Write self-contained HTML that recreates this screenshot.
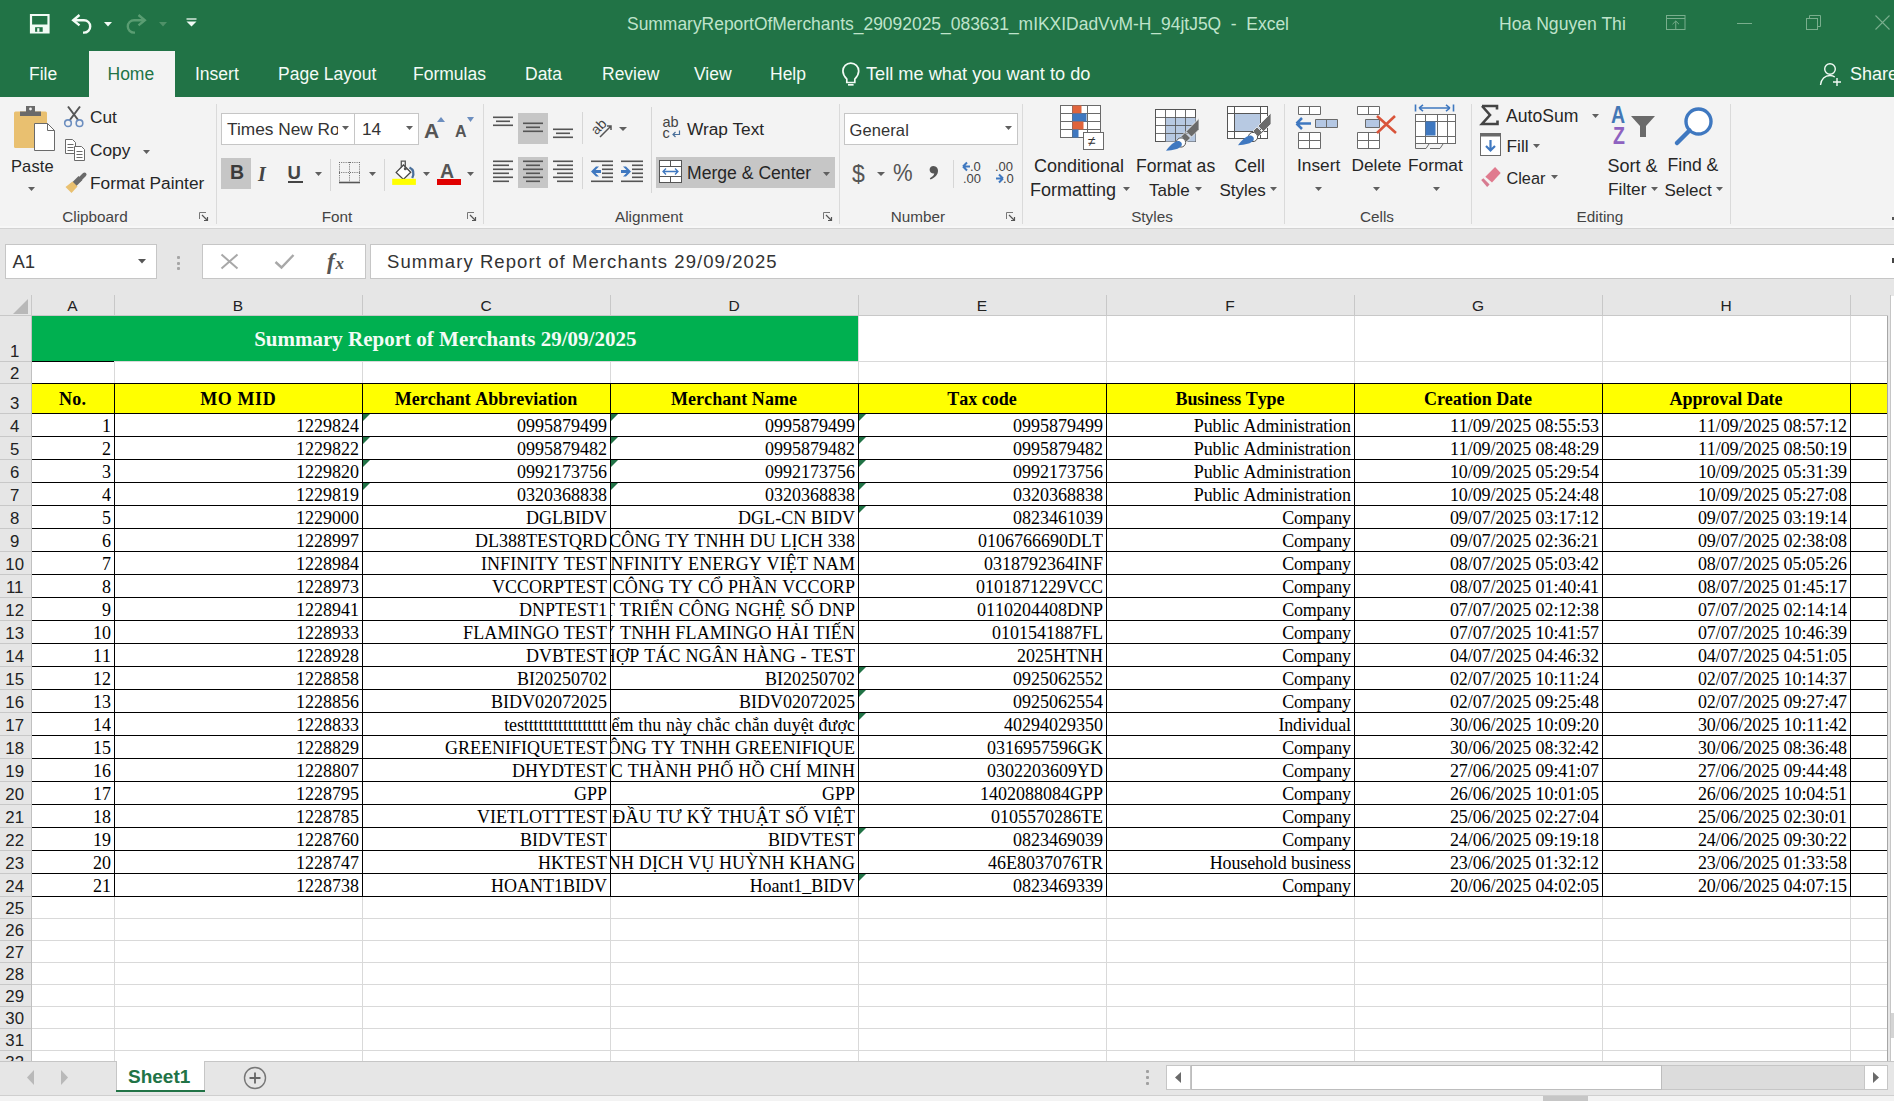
<!DOCTYPE html>
<html><head><meta charset="utf-8"><style>
html,body{margin:0;padding:0;}
body{width:1894px;height:1101px;overflow:hidden;position:relative;background:#e6e6e6;font-family:'Liberation Sans', sans-serif;}
.b{position:absolute;}
.t{position:absolute;white-space:nowrap;line-height:1;}
.c{position:absolute;overflow:hidden;display:flex;justify-content:flex-end;font-family:'Liberation Serif', serif;font-size:18px;line-height:1;font-kerning:none;color:#000;white-space:nowrap}
.c span{position:relative;flex:none}
svg{overflow:visible}
</style></head><body>
<div class="b" style="left:0px;top:0px;width:1894px;height:97px;background:#217346"></div><div class="b" style="left:89px;top:51px;width:86px;height:48px;background:#f3f3f3"></div><div class="t" style="left:627px;top:16.23px;font-size:17.45px;color:#bfe3cb;font-weight:400;font-family:'Liberation Sans', sans-serif;white-space:pre;">SummaryReportOfMerchants_29092025_083631_mIKXIDadVvM-H_94jtJ5Q  -  Excel</div><div class="t" style="left:1499px;top:16.10px;font-size:17.6px;color:#bfe3cb;font-weight:400;font-family:'Liberation Sans', sans-serif;">Hoa Nguyen Thi</div><div class="t" style="left:29px;top:66.19px;font-size:17.5px;color:#f4fbf6;font-weight:400;font-family:'Liberation Sans', sans-serif;">File</div><div class="t" style="left:195px;top:66.19px;font-size:17.5px;color:#f4fbf6;font-weight:400;font-family:'Liberation Sans', sans-serif;">Insert</div><div class="t" style="left:278px;top:66.19px;font-size:17.5px;color:#f4fbf6;font-weight:400;font-family:'Liberation Sans', sans-serif;">Page Layout</div><div class="t" style="left:413px;top:66.19px;font-size:17.5px;color:#f4fbf6;font-weight:400;font-family:'Liberation Sans', sans-serif;">Formulas</div><div class="t" style="left:525px;top:66.19px;font-size:17.5px;color:#f4fbf6;font-weight:400;font-family:'Liberation Sans', sans-serif;">Data</div><div class="t" style="left:602px;top:66.19px;font-size:17.5px;color:#f4fbf6;font-weight:400;font-family:'Liberation Sans', sans-serif;">Review</div><div class="t" style="left:694px;top:66.19px;font-size:17.5px;color:#f4fbf6;font-weight:400;font-family:'Liberation Sans', sans-serif;">View</div><div class="t" style="left:770px;top:66.19px;font-size:17.5px;color:#f4fbf6;font-weight:400;font-family:'Liberation Sans', sans-serif;">Help</div><div class="t" style="left:107.5px;top:66.19px;font-size:17.5px;color:#217346;font-weight:400;font-family:'Liberation Sans', sans-serif;">Home</div><div class="t" style="left:866px;top:64.59px;font-size:18.2px;color:#f4fbf6;font-weight:400;font-family:'Liberation Sans', sans-serif;">Tell me what you want to do</div><div class="t" style="left:1850px;top:64.76px;font-size:18px;color:#f4fbf6;font-weight:400;font-family:'Liberation Sans', sans-serif;">Share</div><div class="b" style="left:0px;top:97px;width:1894px;height:131px;background:#f3f3f3"></div><div class="b" style="left:0px;top:226px;width:1894px;height:2px;background:#f7f7f7"></div><div class="b" style="left:0px;top:228px;width:1894px;height:1px;background:#d2d2d2"></div><div class="b" style="left:216px;top:104px;width:1px;height:120px;background:#dadada"></div><div class="b" style="left:483px;top:104px;width:1px;height:120px;background:#dadada"></div><div class="b" style="left:839px;top:104px;width:1px;height:120px;background:#dadada"></div><div class="b" style="left:1022px;top:104px;width:1px;height:120px;background:#dadada"></div><div class="b" style="left:1284px;top:104px;width:1px;height:120px;background:#dadada"></div><div class="b" style="left:1471px;top:104px;width:1px;height:120px;background:#dadada"></div><div class="b" style="left:1730px;top:104px;width:1px;height:120px;background:#dadada"></div><div class="t" style="left:15.0px;width:160px;text-align:center;top:209.05px;font-size:15.3px;color:#444;font-weight:400;font-family:'Liberation Sans', sans-serif;">Clipboard</div><div class="t" style="left:257.0px;width:160px;text-align:center;top:209.05px;font-size:15.3px;color:#444;font-weight:400;font-family:'Liberation Sans', sans-serif;">Font</div><div class="t" style="left:569.0px;width:160px;text-align:center;top:209.05px;font-size:15.3px;color:#444;font-weight:400;font-family:'Liberation Sans', sans-serif;">Alignment</div><div class="t" style="left:838.0px;width:160px;text-align:center;top:209.05px;font-size:15.3px;color:#444;font-weight:400;font-family:'Liberation Sans', sans-serif;">Number</div><div class="t" style="left:1072.0px;width:160px;text-align:center;top:209.05px;font-size:15.3px;color:#444;font-weight:400;font-family:'Liberation Sans', sans-serif;">Styles</div><div class="t" style="left:1297.0px;width:160px;text-align:center;top:209.05px;font-size:15.3px;color:#444;font-weight:400;font-family:'Liberation Sans', sans-serif;">Cells</div><div class="t" style="left:1520.0px;width:160px;text-align:center;top:209.05px;font-size:15.3px;color:#444;font-weight:400;font-family:'Liberation Sans', sans-serif;">Editing</div><div class="b" style="left:0px;top:229px;width:1894px;height:87px;background:#e6e6e6"></div><div class="b" style="left:5px;top:244px;width:152px;height:35px;background:#fff;border:1px solid #c6c6c6;box-sizing:border-box"></div><div class="t" style="left:12.5px;top:252.84px;font-size:18.5px;color:#333;font-weight:400;font-family:'Liberation Sans', sans-serif;">A1</div><div class="b" style="left:202px;top:244px;width:164px;height:35px;background:#fff;border:1px solid #c6c6c6;box-sizing:border-box"></div><div class="b" style="left:370px;top:244px;width:1530px;height:35px;background:#fff;border:1px solid #c6c6c6;box-sizing:border-box"></div><div class="t" style="left:387px;top:252.84px;font-size:18.5px;color:#333;font-weight:400;font-family:'Liberation Sans', sans-serif;letter-spacing:1.08px;">Summary Report of Merchants 29/09/2025</div><div class="b" style="left:0px;top:295px;width:1888px;height:21px;background:#e6e6e6"></div><div class="b" style="left:0px;top:316px;width:31px;height:745px;background:#e6e6e6"></div><div class="b" style="left:114px;top:295px;width:1px;height:21px;background:#c8c8c8"></div><div class="t" style="left:31.0px;width:83px;text-align:center;top:297.88px;font-size:15.5px;color:#222;font-weight:400;font-family:'Liberation Sans', sans-serif;">A</div><div class="b" style="left:362px;top:295px;width:1px;height:21px;background:#c8c8c8"></div><div class="t" style="left:114.0px;width:248px;text-align:center;top:297.88px;font-size:15.5px;color:#222;font-weight:400;font-family:'Liberation Sans', sans-serif;">B</div><div class="b" style="left:610px;top:295px;width:1px;height:21px;background:#c8c8c8"></div><div class="t" style="left:362.0px;width:248px;text-align:center;top:297.88px;font-size:15.5px;color:#222;font-weight:400;font-family:'Liberation Sans', sans-serif;">C</div><div class="b" style="left:858px;top:295px;width:1px;height:21px;background:#c8c8c8"></div><div class="t" style="left:610.0px;width:248px;text-align:center;top:297.88px;font-size:15.5px;color:#222;font-weight:400;font-family:'Liberation Sans', sans-serif;">D</div><div class="b" style="left:1106px;top:295px;width:1px;height:21px;background:#c8c8c8"></div><div class="t" style="left:858.0px;width:248px;text-align:center;top:297.88px;font-size:15.5px;color:#222;font-weight:400;font-family:'Liberation Sans', sans-serif;">E</div><div class="b" style="left:1354px;top:295px;width:1px;height:21px;background:#c8c8c8"></div><div class="t" style="left:1106.0px;width:248px;text-align:center;top:297.88px;font-size:15.5px;color:#222;font-weight:400;font-family:'Liberation Sans', sans-serif;">F</div><div class="b" style="left:1602px;top:295px;width:1px;height:21px;background:#c8c8c8"></div><div class="t" style="left:1354.0px;width:248px;text-align:center;top:297.88px;font-size:15.5px;color:#222;font-weight:400;font-family:'Liberation Sans', sans-serif;">G</div><div class="b" style="left:1850px;top:295px;width:1px;height:21px;background:#c8c8c8"></div><div class="t" style="left:1602.0px;width:248px;text-align:center;top:297.88px;font-size:15.5px;color:#222;font-weight:400;font-family:'Liberation Sans', sans-serif;">H</div><div class="b" style="left:2098px;top:295px;width:1px;height:21px;background:#c8c8c8"></div><div class="t" style="left:1850.0px;width:248px;text-align:center;top:297.88px;font-size:15.5px;color:#222;font-weight:400;font-family:'Liberation Sans', sans-serif;">I</div><div class="b" style="left:0px;top:315px;width:1888px;height:1px;background:#c8c8c8"></div><div class="b" style="left:31px;top:295px;width:1px;height:21px;background:#c8c8c8"></div><div class="b" style="left:31px;top:316px;width:1857px;height:745px;background:#fff"></div><div class="b" style="left:31px;top:361px;width:1857px;height:1px;background:#d9d9d9"></div><div class="b" style="left:31px;top:383px;width:1857px;height:1px;background:#d9d9d9"></div><div class="b" style="left:31px;top:413px;width:1857px;height:1px;background:#d9d9d9"></div><div class="b" style="left:31px;top:436px;width:1857px;height:1px;background:#d9d9d9"></div><div class="b" style="left:31px;top:459px;width:1857px;height:1px;background:#d9d9d9"></div><div class="b" style="left:31px;top:482px;width:1857px;height:1px;background:#d9d9d9"></div><div class="b" style="left:31px;top:505px;width:1857px;height:1px;background:#d9d9d9"></div><div class="b" style="left:31px;top:528px;width:1857px;height:1px;background:#d9d9d9"></div><div class="b" style="left:31px;top:551px;width:1857px;height:1px;background:#d9d9d9"></div><div class="b" style="left:31px;top:574px;width:1857px;height:1px;background:#d9d9d9"></div><div class="b" style="left:31px;top:597px;width:1857px;height:1px;background:#d9d9d9"></div><div class="b" style="left:31px;top:620px;width:1857px;height:1px;background:#d9d9d9"></div><div class="b" style="left:31px;top:643px;width:1857px;height:1px;background:#d9d9d9"></div><div class="b" style="left:31px;top:666px;width:1857px;height:1px;background:#d9d9d9"></div><div class="b" style="left:31px;top:689px;width:1857px;height:1px;background:#d9d9d9"></div><div class="b" style="left:31px;top:712px;width:1857px;height:1px;background:#d9d9d9"></div><div class="b" style="left:31px;top:735px;width:1857px;height:1px;background:#d9d9d9"></div><div class="b" style="left:31px;top:758px;width:1857px;height:1px;background:#d9d9d9"></div><div class="b" style="left:31px;top:781px;width:1857px;height:1px;background:#d9d9d9"></div><div class="b" style="left:31px;top:804px;width:1857px;height:1px;background:#d9d9d9"></div><div class="b" style="left:31px;top:827px;width:1857px;height:1px;background:#d9d9d9"></div><div class="b" style="left:31px;top:850px;width:1857px;height:1px;background:#d9d9d9"></div><div class="b" style="left:31px;top:873px;width:1857px;height:1px;background:#d9d9d9"></div><div class="b" style="left:31px;top:896px;width:1857px;height:1px;background:#d9d9d9"></div><div class="b" style="left:31px;top:918px;width:1857px;height:1px;background:#d9d9d9"></div><div class="b" style="left:31px;top:940px;width:1857px;height:1px;background:#d9d9d9"></div><div class="b" style="left:31px;top:962px;width:1857px;height:1px;background:#d9d9d9"></div><div class="b" style="left:31px;top:984px;width:1857px;height:1px;background:#d9d9d9"></div><div class="b" style="left:31px;top:1006px;width:1857px;height:1px;background:#d9d9d9"></div><div class="b" style="left:31px;top:1028px;width:1857px;height:1px;background:#d9d9d9"></div><div class="b" style="left:31px;top:1050px;width:1857px;height:1px;background:#d9d9d9"></div><div class="b" style="left:114px;top:316px;width:1px;height:745px;background:#d9d9d9"></div><div class="b" style="left:362px;top:316px;width:1px;height:745px;background:#d9d9d9"></div><div class="b" style="left:610px;top:316px;width:1px;height:745px;background:#d9d9d9"></div><div class="b" style="left:858px;top:316px;width:1px;height:745px;background:#d9d9d9"></div><div class="b" style="left:1106px;top:316px;width:1px;height:745px;background:#d9d9d9"></div><div class="b" style="left:1354px;top:316px;width:1px;height:745px;background:#d9d9d9"></div><div class="b" style="left:1602px;top:316px;width:1px;height:745px;background:#d9d9d9"></div><div class="b" style="left:1850px;top:316px;width:1px;height:745px;background:#d9d9d9"></div><div class="b" style="left:0px;top:361px;width:31px;height:1px;background:#c8c8c8"></div><div class="t" style="left:-0.8000000000000007px;width:31px;text-align:center;top:343.78px;font-size:16.8px;color:#222;font-weight:400;font-family:'Liberation Sans', sans-serif;">1</div><div class="b" style="left:0px;top:383px;width:31px;height:1px;background:#c8c8c8"></div><div class="t" style="left:-0.8000000000000007px;width:31px;text-align:center;top:365.78px;font-size:16.8px;color:#222;font-weight:400;font-family:'Liberation Sans', sans-serif;">2</div><div class="b" style="left:0px;top:413px;width:31px;height:1px;background:#c8c8c8"></div><div class="t" style="left:-0.8000000000000007px;width:31px;text-align:center;top:395.78px;font-size:16.8px;color:#222;font-weight:400;font-family:'Liberation Sans', sans-serif;">3</div><div class="b" style="left:0px;top:436px;width:31px;height:1px;background:#c8c8c8"></div><div class="t" style="left:-0.8000000000000007px;width:31px;text-align:center;top:418.78px;font-size:16.8px;color:#222;font-weight:400;font-family:'Liberation Sans', sans-serif;">4</div><div class="b" style="left:0px;top:459px;width:31px;height:1px;background:#c8c8c8"></div><div class="t" style="left:-0.8000000000000007px;width:31px;text-align:center;top:441.78px;font-size:16.8px;color:#222;font-weight:400;font-family:'Liberation Sans', sans-serif;">5</div><div class="b" style="left:0px;top:482px;width:31px;height:1px;background:#c8c8c8"></div><div class="t" style="left:-0.8000000000000007px;width:31px;text-align:center;top:464.78px;font-size:16.8px;color:#222;font-weight:400;font-family:'Liberation Sans', sans-serif;">6</div><div class="b" style="left:0px;top:505px;width:31px;height:1px;background:#c8c8c8"></div><div class="t" style="left:-0.8000000000000007px;width:31px;text-align:center;top:487.78px;font-size:16.8px;color:#222;font-weight:400;font-family:'Liberation Sans', sans-serif;">7</div><div class="b" style="left:0px;top:528px;width:31px;height:1px;background:#c8c8c8"></div><div class="t" style="left:-0.8000000000000007px;width:31px;text-align:center;top:510.78px;font-size:16.8px;color:#222;font-weight:400;font-family:'Liberation Sans', sans-serif;">8</div><div class="b" style="left:0px;top:551px;width:31px;height:1px;background:#c8c8c8"></div><div class="t" style="left:-0.8000000000000007px;width:31px;text-align:center;top:533.78px;font-size:16.8px;color:#222;font-weight:400;font-family:'Liberation Sans', sans-serif;">9</div><div class="b" style="left:0px;top:574px;width:31px;height:1px;background:#c8c8c8"></div><div class="t" style="left:-0.8000000000000007px;width:31px;text-align:center;top:556.78px;font-size:16.8px;color:#222;font-weight:400;font-family:'Liberation Sans', sans-serif;">10</div><div class="b" style="left:0px;top:597px;width:31px;height:1px;background:#c8c8c8"></div><div class="t" style="left:-0.8000000000000007px;width:31px;text-align:center;top:579.78px;font-size:16.8px;color:#222;font-weight:400;font-family:'Liberation Sans', sans-serif;">11</div><div class="b" style="left:0px;top:620px;width:31px;height:1px;background:#c8c8c8"></div><div class="t" style="left:-0.8000000000000007px;width:31px;text-align:center;top:602.78px;font-size:16.8px;color:#222;font-weight:400;font-family:'Liberation Sans', sans-serif;">12</div><div class="b" style="left:0px;top:643px;width:31px;height:1px;background:#c8c8c8"></div><div class="t" style="left:-0.8000000000000007px;width:31px;text-align:center;top:625.78px;font-size:16.8px;color:#222;font-weight:400;font-family:'Liberation Sans', sans-serif;">13</div><div class="b" style="left:0px;top:666px;width:31px;height:1px;background:#c8c8c8"></div><div class="t" style="left:-0.8000000000000007px;width:31px;text-align:center;top:648.78px;font-size:16.8px;color:#222;font-weight:400;font-family:'Liberation Sans', sans-serif;">14</div><div class="b" style="left:0px;top:689px;width:31px;height:1px;background:#c8c8c8"></div><div class="t" style="left:-0.8000000000000007px;width:31px;text-align:center;top:671.78px;font-size:16.8px;color:#222;font-weight:400;font-family:'Liberation Sans', sans-serif;">15</div><div class="b" style="left:0px;top:712px;width:31px;height:1px;background:#c8c8c8"></div><div class="t" style="left:-0.8000000000000007px;width:31px;text-align:center;top:694.78px;font-size:16.8px;color:#222;font-weight:400;font-family:'Liberation Sans', sans-serif;">16</div><div class="b" style="left:0px;top:735px;width:31px;height:1px;background:#c8c8c8"></div><div class="t" style="left:-0.8000000000000007px;width:31px;text-align:center;top:717.78px;font-size:16.8px;color:#222;font-weight:400;font-family:'Liberation Sans', sans-serif;">17</div><div class="b" style="left:0px;top:758px;width:31px;height:1px;background:#c8c8c8"></div><div class="t" style="left:-0.8000000000000007px;width:31px;text-align:center;top:740.78px;font-size:16.8px;color:#222;font-weight:400;font-family:'Liberation Sans', sans-serif;">18</div><div class="b" style="left:0px;top:781px;width:31px;height:1px;background:#c8c8c8"></div><div class="t" style="left:-0.8000000000000007px;width:31px;text-align:center;top:763.78px;font-size:16.8px;color:#222;font-weight:400;font-family:'Liberation Sans', sans-serif;">19</div><div class="b" style="left:0px;top:804px;width:31px;height:1px;background:#c8c8c8"></div><div class="t" style="left:-0.8000000000000007px;width:31px;text-align:center;top:786.78px;font-size:16.8px;color:#222;font-weight:400;font-family:'Liberation Sans', sans-serif;">20</div><div class="b" style="left:0px;top:827px;width:31px;height:1px;background:#c8c8c8"></div><div class="t" style="left:-0.8000000000000007px;width:31px;text-align:center;top:809.78px;font-size:16.8px;color:#222;font-weight:400;font-family:'Liberation Sans', sans-serif;">21</div><div class="b" style="left:0px;top:850px;width:31px;height:1px;background:#c8c8c8"></div><div class="t" style="left:-0.8000000000000007px;width:31px;text-align:center;top:832.78px;font-size:16.8px;color:#222;font-weight:400;font-family:'Liberation Sans', sans-serif;">22</div><div class="b" style="left:0px;top:873px;width:31px;height:1px;background:#c8c8c8"></div><div class="t" style="left:-0.8000000000000007px;width:31px;text-align:center;top:855.78px;font-size:16.8px;color:#222;font-weight:400;font-family:'Liberation Sans', sans-serif;">23</div><div class="b" style="left:0px;top:896px;width:31px;height:1px;background:#c8c8c8"></div><div class="t" style="left:-0.8000000000000007px;width:31px;text-align:center;top:878.78px;font-size:16.8px;color:#222;font-weight:400;font-family:'Liberation Sans', sans-serif;">24</div><div class="b" style="left:0px;top:918px;width:31px;height:1px;background:#c8c8c8"></div><div class="t" style="left:-0.8000000000000007px;width:31px;text-align:center;top:900.78px;font-size:16.8px;color:#222;font-weight:400;font-family:'Liberation Sans', sans-serif;">25</div><div class="b" style="left:0px;top:940px;width:31px;height:1px;background:#c8c8c8"></div><div class="t" style="left:-0.8000000000000007px;width:31px;text-align:center;top:922.78px;font-size:16.8px;color:#222;font-weight:400;font-family:'Liberation Sans', sans-serif;">26</div><div class="b" style="left:0px;top:962px;width:31px;height:1px;background:#c8c8c8"></div><div class="t" style="left:-0.8000000000000007px;width:31px;text-align:center;top:944.78px;font-size:16.8px;color:#222;font-weight:400;font-family:'Liberation Sans', sans-serif;">27</div><div class="b" style="left:0px;top:984px;width:31px;height:1px;background:#c8c8c8"></div><div class="t" style="left:-0.8000000000000007px;width:31px;text-align:center;top:966.78px;font-size:16.8px;color:#222;font-weight:400;font-family:'Liberation Sans', sans-serif;">28</div><div class="b" style="left:0px;top:1006px;width:31px;height:1px;background:#c8c8c8"></div><div class="t" style="left:-0.8000000000000007px;width:31px;text-align:center;top:988.78px;font-size:16.8px;color:#222;font-weight:400;font-family:'Liberation Sans', sans-serif;">29</div><div class="b" style="left:0px;top:1028px;width:31px;height:1px;background:#c8c8c8"></div><div class="t" style="left:-0.8000000000000007px;width:31px;text-align:center;top:1010.78px;font-size:16.8px;color:#222;font-weight:400;font-family:'Liberation Sans', sans-serif;">30</div><div class="b" style="left:0px;top:1050px;width:31px;height:1px;background:#c8c8c8"></div><div class="t" style="left:-0.8000000000000007px;width:31px;text-align:center;top:1032.78px;font-size:16.8px;color:#222;font-weight:400;font-family:'Liberation Sans', sans-serif;">31</div><div class="b" style="left:0px;top:1072px;width:31px;height:1px;background:#c8c8c8"></div><div class="t" style="left:-0.8000000000000007px;width:31px;text-align:center;top:1054.78px;font-size:16.8px;color:#222;font-weight:400;font-family:'Liberation Sans', sans-serif;">32</div><div class="b" style="left:31px;top:316px;width:827px;height:45px;background:#00b050"></div><div class="t" style="left:31.80000000000001px;width:827px;text-align:center;top:328.71px;font-size:21px;color:#f4fbf6;font-weight:700;font-family:'Liberation Serif', serif;">Summary Report of Merchants 29/09/2025</div><div class="b" style="left:31px;top:361px;width:83px;height:1px;background:#000"></div><div class="b" style="left:31px;top:383px;width:1857px;height:30px;background:#ffff00"></div><div class="t" style="left:31.0px;width:83px;text-align:center;top:390.43px;font-size:18px;color:#000;font-weight:700;font-family:'Liberation Serif', serif;letter-spacing:0.134px;text-indent:0.134px;font-kerning:none;">No.</div><div class="t" style="left:114.0px;width:248px;text-align:center;top:390.43px;font-size:18px;color:#000;font-weight:700;font-family:'Liberation Serif', serif;letter-spacing:0.586px;text-indent:0.586px;font-kerning:none;">MO MID</div><div class="t" style="left:362.0px;width:248px;text-align:center;top:390.43px;font-size:18px;color:#000;font-weight:700;font-family:'Liberation Serif', serif;letter-spacing:-0.006px;text-indent:-0.006px;font-kerning:none;">Merchant Abbreviation</div><div class="t" style="left:610.0px;width:248px;text-align:center;top:390.43px;font-size:18px;color:#000;font-weight:700;font-family:'Liberation Serif', serif;letter-spacing:0.039px;text-indent:0.039px;font-kerning:none;">Merchant Name</div><div class="t" style="left:858.0px;width:248px;text-align:center;top:390.43px;font-size:18px;color:#000;font-weight:700;font-family:'Liberation Serif', serif;letter-spacing:-0.012px;text-indent:-0.012px;font-kerning:none;">Tax code</div><div class="t" style="left:1106.0px;width:248px;text-align:center;top:390.43px;font-size:18px;color:#000;font-weight:700;font-family:'Liberation Serif', serif;letter-spacing:-0.032px;text-indent:-0.032px;font-kerning:none;">Business Type</div><div class="t" style="left:1354.0px;width:248px;text-align:center;top:390.43px;font-size:18px;color:#000;font-weight:700;font-family:'Liberation Serif', serif;letter-spacing:-0.028px;text-indent:-0.028px;font-kerning:none;">Creation Date</div><div class="t" style="left:1602.0px;width:248px;text-align:center;top:390.43px;font-size:18px;color:#000;font-weight:700;font-family:'Liberation Serif', serif;letter-spacing:-0.032px;text-indent:-0.032px;font-kerning:none;">Approval Date</div><div class="b" style="left:31px;top:383px;width:1857px;height:1px;background:#000"></div><div class="b" style="left:31px;top:413px;width:1857px;height:1px;background:#000"></div><div class="b" style="left:31px;top:436px;width:1857px;height:1px;background:#000"></div><div class="b" style="left:31px;top:459px;width:1857px;height:1px;background:#000"></div><div class="b" style="left:31px;top:482px;width:1857px;height:1px;background:#000"></div><div class="b" style="left:31px;top:505px;width:1857px;height:1px;background:#000"></div><div class="b" style="left:31px;top:528px;width:1857px;height:1px;background:#000"></div><div class="b" style="left:31px;top:551px;width:1857px;height:1px;background:#000"></div><div class="b" style="left:31px;top:574px;width:1857px;height:1px;background:#000"></div><div class="b" style="left:31px;top:597px;width:1857px;height:1px;background:#000"></div><div class="b" style="left:31px;top:620px;width:1857px;height:1px;background:#000"></div><div class="b" style="left:31px;top:643px;width:1857px;height:1px;background:#000"></div><div class="b" style="left:31px;top:666px;width:1857px;height:1px;background:#000"></div><div class="b" style="left:31px;top:689px;width:1857px;height:1px;background:#000"></div><div class="b" style="left:31px;top:712px;width:1857px;height:1px;background:#000"></div><div class="b" style="left:31px;top:735px;width:1857px;height:1px;background:#000"></div><div class="b" style="left:31px;top:758px;width:1857px;height:1px;background:#000"></div><div class="b" style="left:31px;top:781px;width:1857px;height:1px;background:#000"></div><div class="b" style="left:31px;top:804px;width:1857px;height:1px;background:#000"></div><div class="b" style="left:31px;top:827px;width:1857px;height:1px;background:#000"></div><div class="b" style="left:31px;top:850px;width:1857px;height:1px;background:#000"></div><div class="b" style="left:31px;top:873px;width:1857px;height:1px;background:#000"></div><div class="b" style="left:31px;top:896px;width:1857px;height:1px;background:#000"></div><div class="b" style="left:114px;top:383px;width:1px;height:514px;background:#000"></div><div class="b" style="left:362px;top:383px;width:1px;height:514px;background:#000"></div><div class="b" style="left:610px;top:383px;width:1px;height:514px;background:#000"></div><div class="b" style="left:858px;top:383px;width:1px;height:514px;background:#000"></div><div class="b" style="left:1106px;top:383px;width:1px;height:514px;background:#000"></div><div class="b" style="left:1354px;top:383px;width:1px;height:514px;background:#000"></div><div class="b" style="left:1602px;top:383px;width:1px;height:514px;background:#000"></div><div class="b" style="left:1850px;top:383px;width:1px;height:514px;background:#000"></div><div class="c" style="left:32px;top:414px;width:79px;height:22px"><span style="top:3.03px;letter-spacing:0.000px;margin-right:-0.000px">1</span></div><div class="c" style="left:115px;top:414px;width:244px;height:22px"><span style="top:3.03px;letter-spacing:0.000px;margin-right:-0.000px">1229824</span></div><div class="c" style="left:363px;top:414px;width:244px;height:22px"><span style="top:3.03px;letter-spacing:0.000px;margin-right:-0.000px">0995879499</span></div><div class="c" style="left:611px;top:414px;width:244px;height:22px"><span style="top:3.03px;letter-spacing:0.000px;margin-right:-0.000px">0995879499</span></div><div class="c" style="left:859px;top:414px;width:244px;height:22px"><span style="top:3.03px;letter-spacing:0.000px;margin-right:-0.000px">0995879499</span></div><div class="c" style="left:1107px;top:414px;width:244px;height:22px"><span style="top:3.03px;letter-spacing:-0.116px;margin-right:0.116px">Public Administration</span></div><div class="c" style="left:1355px;top:414px;width:244px;height:22px"><span style="top:3.03px;letter-spacing:-0.079px;margin-right:0.079px">11/09/2025 08:55:53</span></div><div class="c" style="left:1603px;top:414px;width:244px;height:22px"><span style="top:3.03px;letter-spacing:-0.079px;margin-right:0.079px">11/09/2025 08:57:12</span></div><div class="c" style="left:32px;top:437px;width:79px;height:22px"><span style="top:3.03px;letter-spacing:0.000px;margin-right:-0.000px">2</span></div><div class="c" style="left:115px;top:437px;width:244px;height:22px"><span style="top:3.03px;letter-spacing:0.000px;margin-right:-0.000px">1229822</span></div><div class="c" style="left:363px;top:437px;width:244px;height:22px"><span style="top:3.03px;letter-spacing:0.000px;margin-right:-0.000px">0995879482</span></div><div class="c" style="left:611px;top:437px;width:244px;height:22px"><span style="top:3.03px;letter-spacing:0.000px;margin-right:-0.000px">0995879482</span></div><div class="c" style="left:859px;top:437px;width:244px;height:22px"><span style="top:3.03px;letter-spacing:0.000px;margin-right:-0.000px">0995879482</span></div><div class="c" style="left:1107px;top:437px;width:244px;height:22px"><span style="top:3.03px;letter-spacing:-0.116px;margin-right:0.116px">Public Administration</span></div><div class="c" style="left:1355px;top:437px;width:244px;height:22px"><span style="top:3.03px;letter-spacing:-0.079px;margin-right:0.079px">11/09/2025 08:48:29</span></div><div class="c" style="left:1603px;top:437px;width:244px;height:22px"><span style="top:3.03px;letter-spacing:-0.079px;margin-right:0.079px">11/09/2025 08:50:19</span></div><div class="c" style="left:32px;top:460px;width:79px;height:22px"><span style="top:3.03px;letter-spacing:0.000px;margin-right:-0.000px">3</span></div><div class="c" style="left:115px;top:460px;width:244px;height:22px"><span style="top:3.03px;letter-spacing:0.000px;margin-right:-0.000px">1229820</span></div><div class="c" style="left:363px;top:460px;width:244px;height:22px"><span style="top:3.03px;letter-spacing:0.000px;margin-right:-0.000px">0992173756</span></div><div class="c" style="left:611px;top:460px;width:244px;height:22px"><span style="top:3.03px;letter-spacing:0.000px;margin-right:-0.000px">0992173756</span></div><div class="c" style="left:859px;top:460px;width:244px;height:22px"><span style="top:3.03px;letter-spacing:0.000px;margin-right:-0.000px">0992173756</span></div><div class="c" style="left:1107px;top:460px;width:244px;height:22px"><span style="top:3.03px;letter-spacing:-0.116px;margin-right:0.116px">Public Administration</span></div><div class="c" style="left:1355px;top:460px;width:244px;height:22px"><span style="top:3.03px;letter-spacing:-0.079px;margin-right:0.079px">10/09/2025 05:29:54</span></div><div class="c" style="left:1603px;top:460px;width:244px;height:22px"><span style="top:3.03px;letter-spacing:-0.079px;margin-right:0.079px">10/09/2025 05:31:39</span></div><div class="c" style="left:32px;top:483px;width:79px;height:22px"><span style="top:3.03px;letter-spacing:0.000px;margin-right:-0.000px">4</span></div><div class="c" style="left:115px;top:483px;width:244px;height:22px"><span style="top:3.03px;letter-spacing:0.000px;margin-right:-0.000px">1229819</span></div><div class="c" style="left:363px;top:483px;width:244px;height:22px"><span style="top:3.03px;letter-spacing:0.000px;margin-right:-0.000px">0320368838</span></div><div class="c" style="left:611px;top:483px;width:244px;height:22px"><span style="top:3.03px;letter-spacing:0.000px;margin-right:-0.000px">0320368838</span></div><div class="c" style="left:859px;top:483px;width:244px;height:22px"><span style="top:3.03px;letter-spacing:0.000px;margin-right:-0.000px">0320368838</span></div><div class="c" style="left:1107px;top:483px;width:244px;height:22px"><span style="top:3.03px;letter-spacing:-0.116px;margin-right:0.116px">Public Administration</span></div><div class="c" style="left:1355px;top:483px;width:244px;height:22px"><span style="top:3.03px;letter-spacing:-0.079px;margin-right:0.079px">10/09/2025 05:24:48</span></div><div class="c" style="left:1603px;top:483px;width:244px;height:22px"><span style="top:3.03px;letter-spacing:-0.079px;margin-right:0.079px">10/09/2025 05:27:08</span></div><div class="c" style="left:32px;top:506px;width:79px;height:22px"><span style="top:3.03px;letter-spacing:0.000px;margin-right:-0.000px">5</span></div><div class="c" style="left:115px;top:506px;width:244px;height:22px"><span style="top:3.03px;letter-spacing:0.000px;margin-right:-0.000px">1229000</span></div><div class="c" style="left:363px;top:506px;width:244px;height:22px"><span style="top:3.03px;letter-spacing:0.001px;margin-right:-0.001px">DGLBIDV</span></div><div class="c" style="left:611px;top:506px;width:244px;height:22px"><span style="top:3.03px;letter-spacing:0.046px;margin-right:-0.046px">DGL-CN BIDV</span></div><div class="c" style="left:859px;top:506px;width:244px;height:22px"><span style="top:3.03px;letter-spacing:0.000px;margin-right:-0.000px">0823461039</span></div><div class="c" style="left:1107px;top:506px;width:244px;height:22px"><span style="top:3.03px;letter-spacing:-0.185px;margin-right:0.185px">Company</span></div><div class="c" style="left:1355px;top:506px;width:244px;height:22px"><span style="top:3.03px;letter-spacing:-0.079px;margin-right:0.079px">09/07/2025 03:17:12</span></div><div class="c" style="left:1603px;top:506px;width:244px;height:22px"><span style="top:3.03px;letter-spacing:-0.079px;margin-right:0.079px">09/07/2025 03:19:14</span></div><div class="c" style="left:32px;top:529px;width:79px;height:22px"><span style="top:3.03px;letter-spacing:0.000px;margin-right:-0.000px">6</span></div><div class="c" style="left:115px;top:529px;width:244px;height:22px"><span style="top:3.03px;letter-spacing:0.000px;margin-right:-0.000px">1228997</span></div><div class="c" style="left:363px;top:529px;width:244px;height:22px"><span style="top:3.03px;letter-spacing:0.000px;margin-right:-0.000px">DL388TESTQRD</span></div><div class="c" style="left:611px;top:529px;width:244px;height:22px"><span style="top:3.03px;letter-spacing:0.147px;margin-right:-0.147px">CÔNG TY TNHH DU LỊCH 338</span></div><div class="c" style="left:859px;top:529px;width:244px;height:22px"><span style="top:3.03px;letter-spacing:0.001px;margin-right:-0.001px">0106766690DLT</span></div><div class="c" style="left:1107px;top:529px;width:244px;height:22px"><span style="top:3.03px;letter-spacing:-0.185px;margin-right:0.185px">Company</span></div><div class="c" style="left:1355px;top:529px;width:244px;height:22px"><span style="top:3.03px;letter-spacing:-0.079px;margin-right:0.079px">09/07/2025 02:36:21</span></div><div class="c" style="left:1603px;top:529px;width:244px;height:22px"><span style="top:3.03px;letter-spacing:-0.079px;margin-right:0.079px">09/07/2025 02:38:08</span></div><div class="c" style="left:32px;top:552px;width:79px;height:22px"><span style="top:3.03px;letter-spacing:0.000px;margin-right:-0.000px">7</span></div><div class="c" style="left:115px;top:552px;width:244px;height:22px"><span style="top:3.03px;letter-spacing:0.000px;margin-right:-0.000px">1228984</span></div><div class="c" style="left:363px;top:552px;width:244px;height:22px"><span style="top:3.03px;letter-spacing:0.040px;margin-right:-0.040px">INFINITY TEST</span></div><div class="c" style="left:611px;top:552px;width:244px;height:22px"><span style="top:3.03px;letter-spacing:0.136px;margin-right:-0.136px">CÔNG TY TNHH INFINITY ENERGY VIỆT NAM</span></div><div class="c" style="left:859px;top:552px;width:244px;height:22px"><span style="top:3.03px;letter-spacing:-0.000px;margin-right:0.000px">0318792364INF</span></div><div class="c" style="left:1107px;top:552px;width:244px;height:22px"><span style="top:3.03px;letter-spacing:-0.185px;margin-right:0.185px">Company</span></div><div class="c" style="left:1355px;top:552px;width:244px;height:22px"><span style="top:3.03px;letter-spacing:-0.079px;margin-right:0.079px">08/07/2025 05:03:42</span></div><div class="c" style="left:1603px;top:552px;width:244px;height:22px"><span style="top:3.03px;letter-spacing:-0.079px;margin-right:0.079px">08/07/2025 05:05:26</span></div><div class="c" style="left:32px;top:575px;width:79px;height:22px"><span style="top:3.03px;letter-spacing:0.000px;margin-right:-0.000px">8</span></div><div class="c" style="left:115px;top:575px;width:244px;height:22px"><span style="top:3.03px;letter-spacing:0.000px;margin-right:-0.000px">1228973</span></div><div class="c" style="left:363px;top:575px;width:244px;height:22px"><span style="top:3.03px;letter-spacing:-0.002px;margin-right:0.002px">VCCORPTEST</span></div><div class="c" style="left:611px;top:575px;width:244px;height:22px"><span style="top:3.03px;letter-spacing:0.157px;margin-right:-0.157px">CÔNG TY CỔ PHẦN VCCORP</span></div><div class="c" style="left:859px;top:575px;width:244px;height:22px"><span style="top:3.03px;letter-spacing:-0.001px;margin-right:0.001px">0101871229VCC</span></div><div class="c" style="left:1107px;top:575px;width:244px;height:22px"><span style="top:3.03px;letter-spacing:-0.185px;margin-right:0.185px">Company</span></div><div class="c" style="left:1355px;top:575px;width:244px;height:22px"><span style="top:3.03px;letter-spacing:-0.079px;margin-right:0.079px">08/07/2025 01:40:41</span></div><div class="c" style="left:1603px;top:575px;width:244px;height:22px"><span style="top:3.03px;letter-spacing:-0.079px;margin-right:0.079px">08/07/2025 01:45:17</span></div><div class="c" style="left:32px;top:598px;width:79px;height:22px"><span style="top:3.03px;letter-spacing:0.000px;margin-right:-0.000px">9</span></div><div class="c" style="left:115px;top:598px;width:244px;height:22px"><span style="top:3.03px;letter-spacing:0.000px;margin-right:-0.000px">1228941</span></div><div class="c" style="left:363px;top:598px;width:244px;height:22px"><span style="top:3.03px;letter-spacing:-0.001px;margin-right:0.001px">DNPTEST1</span></div><div class="c" style="left:611px;top:598px;width:244px;height:22px"><span style="top:3.03px;letter-spacing:0.197px;margin-right:-0.197px">CÔNG TY CỔ PHẦN PHÁT TRIỂN CÔNG NGHỆ SỐ DNP</span></div><div class="c" style="left:859px;top:598px;width:244px;height:22px"><span style="top:3.03px;letter-spacing:-0.001px;margin-right:0.001px">0110204408DNP</span></div><div class="c" style="left:1107px;top:598px;width:244px;height:22px"><span style="top:3.03px;letter-spacing:-0.185px;margin-right:0.185px">Company</span></div><div class="c" style="left:1355px;top:598px;width:244px;height:22px"><span style="top:3.03px;letter-spacing:-0.079px;margin-right:0.079px">07/07/2025 02:12:38</span></div><div class="c" style="left:1603px;top:598px;width:244px;height:22px"><span style="top:3.03px;letter-spacing:-0.079px;margin-right:0.079px">07/07/2025 02:14:14</span></div><div class="c" style="left:32px;top:621px;width:79px;height:22px"><span style="top:3.03px;letter-spacing:0.000px;margin-right:-0.000px">10</span></div><div class="c" style="left:115px;top:621px;width:244px;height:22px"><span style="top:3.03px;letter-spacing:0.000px;margin-right:-0.000px">1228933</span></div><div class="c" style="left:363px;top:621px;width:244px;height:22px"><span style="top:3.03px;letter-spacing:0.116px;margin-right:-0.116px">FLAMINGO TEST</span></div><div class="c" style="left:611px;top:621px;width:244px;height:22px"><span style="top:3.03px;letter-spacing:0.168px;margin-right:-0.168px">CÔNG TY TNHH FLAMINGO HẢI TIẾN</span></div><div class="c" style="left:859px;top:621px;width:244px;height:22px"><span style="top:3.03px;letter-spacing:-0.000px;margin-right:0.000px">0101541887FL</span></div><div class="c" style="left:1107px;top:621px;width:244px;height:22px"><span style="top:3.03px;letter-spacing:-0.185px;margin-right:0.185px">Company</span></div><div class="c" style="left:1355px;top:621px;width:244px;height:22px"><span style="top:3.03px;letter-spacing:-0.079px;margin-right:0.079px">07/07/2025 10:41:57</span></div><div class="c" style="left:1603px;top:621px;width:244px;height:22px"><span style="top:3.03px;letter-spacing:-0.079px;margin-right:0.079px">07/07/2025 10:46:39</span></div><div class="c" style="left:32px;top:644px;width:79px;height:22px"><span style="top:3.03px;letter-spacing:0.000px;margin-right:-0.000px">11</span></div><div class="c" style="left:115px;top:644px;width:244px;height:22px"><span style="top:3.03px;letter-spacing:0.000px;margin-right:-0.000px">1228928</span></div><div class="c" style="left:363px;top:644px;width:244px;height:22px"><span style="top:3.03px;letter-spacing:0.000px;margin-right:-0.000px">DVBTEST</span></div><div class="c" style="left:611px;top:644px;width:244px;height:22px"><span style="top:3.03px;letter-spacing:0.204px;margin-right:-0.204px">DỊCH VỤ HỢP TÁC NGÂN HÀNG - TEST</span></div><div class="c" style="left:859px;top:644px;width:244px;height:22px"><span style="top:3.03px;letter-spacing:0.001px;margin-right:-0.001px">2025HTNH</span></div><div class="c" style="left:1107px;top:644px;width:244px;height:22px"><span style="top:3.03px;letter-spacing:-0.185px;margin-right:0.185px">Company</span></div><div class="c" style="left:1355px;top:644px;width:244px;height:22px"><span style="top:3.03px;letter-spacing:-0.079px;margin-right:0.079px">04/07/2025 04:46:32</span></div><div class="c" style="left:1603px;top:644px;width:244px;height:22px"><span style="top:3.03px;letter-spacing:-0.079px;margin-right:0.079px">04/07/2025 04:51:05</span></div><div class="c" style="left:32px;top:667px;width:79px;height:22px"><span style="top:3.03px;letter-spacing:0.000px;margin-right:-0.000px">12</span></div><div class="c" style="left:115px;top:667px;width:244px;height:22px"><span style="top:3.03px;letter-spacing:0.000px;margin-right:-0.000px">1228858</span></div><div class="c" style="left:363px;top:667px;width:244px;height:22px"><span style="top:3.03px;letter-spacing:0.000px;margin-right:-0.000px">BI20250702</span></div><div class="c" style="left:611px;top:667px;width:244px;height:22px"><span style="top:3.03px;letter-spacing:0.000px;margin-right:-0.000px">BI20250702</span></div><div class="c" style="left:859px;top:667px;width:244px;height:22px"><span style="top:3.03px;letter-spacing:0.000px;margin-right:-0.000px">0925062552</span></div><div class="c" style="left:1107px;top:667px;width:244px;height:22px"><span style="top:3.03px;letter-spacing:-0.185px;margin-right:0.185px">Company</span></div><div class="c" style="left:1355px;top:667px;width:244px;height:22px"><span style="top:3.03px;letter-spacing:-0.079px;margin-right:0.079px">02/07/2025 10:11:24</span></div><div class="c" style="left:1603px;top:667px;width:244px;height:22px"><span style="top:3.03px;letter-spacing:-0.079px;margin-right:0.079px">02/07/2025 10:14:37</span></div><div class="c" style="left:32px;top:690px;width:79px;height:22px"><span style="top:3.03px;letter-spacing:0.000px;margin-right:-0.000px">13</span></div><div class="c" style="left:115px;top:690px;width:244px;height:22px"><span style="top:3.03px;letter-spacing:0.000px;margin-right:-0.000px">1228856</span></div><div class="c" style="left:363px;top:690px;width:244px;height:22px"><span style="top:3.03px;letter-spacing:0.000px;margin-right:-0.000px">BIDV02072025</span></div><div class="c" style="left:611px;top:690px;width:244px;height:22px"><span style="top:3.03px;letter-spacing:0.000px;margin-right:-0.000px">BIDV02072025</span></div><div class="c" style="left:859px;top:690px;width:244px;height:22px"><span style="top:3.03px;letter-spacing:0.000px;margin-right:-0.000px">0925062554</span></div><div class="c" style="left:1107px;top:690px;width:244px;height:22px"><span style="top:3.03px;letter-spacing:-0.185px;margin-right:0.185px">Company</span></div><div class="c" style="left:1355px;top:690px;width:244px;height:22px"><span style="top:3.03px;letter-spacing:-0.079px;margin-right:0.079px">02/07/2025 09:25:48</span></div><div class="c" style="left:1603px;top:690px;width:244px;height:22px"><span style="top:3.03px;letter-spacing:-0.079px;margin-right:0.079px">02/07/2025 09:27:47</span></div><div class="c" style="left:32px;top:713px;width:79px;height:22px"><span style="top:3.03px;letter-spacing:0.000px;margin-right:-0.000px">14</span></div><div class="c" style="left:115px;top:713px;width:244px;height:22px"><span style="top:3.03px;letter-spacing:0.000px;margin-right:-0.000px">1228833</span></div><div class="c" style="left:363px;top:713px;width:244px;height:22px"><span style="top:3.03px;letter-spacing:-0.117px;margin-right:0.117px">testtttttttttttttttt</span></div><div class="c" style="left:611px;top:713px;width:244px;height:22px"><span style="top:3.03px;letter-spacing:0.080px;margin-right:-0.080px">Điểm thu này chắc chắn duyệt được</span></div><div class="c" style="left:859px;top:713px;width:244px;height:22px"><span style="top:3.03px;letter-spacing:0.000px;margin-right:-0.000px">40294029350</span></div><div class="c" style="left:1107px;top:713px;width:244px;height:22px"><span style="top:3.03px;letter-spacing:-0.151px;margin-right:0.151px">Individual</span></div><div class="c" style="left:1355px;top:713px;width:244px;height:22px"><span style="top:3.03px;letter-spacing:-0.079px;margin-right:0.079px">30/06/2025 10:09:20</span></div><div class="c" style="left:1603px;top:713px;width:244px;height:22px"><span style="top:3.03px;letter-spacing:-0.079px;margin-right:0.079px">30/06/2025 10:11:42</span></div><div class="c" style="left:32px;top:736px;width:79px;height:22px"><span style="top:3.03px;letter-spacing:0.000px;margin-right:-0.000px">15</span></div><div class="c" style="left:115px;top:736px;width:244px;height:22px"><span style="top:3.03px;letter-spacing:0.000px;margin-right:-0.000px">1228829</span></div><div class="c" style="left:363px;top:736px;width:244px;height:22px"><span style="top:3.03px;letter-spacing:0.001px;margin-right:-0.001px">GREENIFIQUETEST</span></div><div class="c" style="left:611px;top:736px;width:244px;height:22px"><span style="top:3.03px;letter-spacing:0.084px;margin-right:-0.084px">CÔNG TY TNHH GREENIFIQUE</span></div><div class="c" style="left:859px;top:736px;width:244px;height:22px"><span style="top:3.03px;letter-spacing:0.000px;margin-right:-0.000px">0316957596GK</span></div><div class="c" style="left:1107px;top:736px;width:244px;height:22px"><span style="top:3.03px;letter-spacing:-0.185px;margin-right:0.185px">Company</span></div><div class="c" style="left:1355px;top:736px;width:244px;height:22px"><span style="top:3.03px;letter-spacing:-0.079px;margin-right:0.079px">30/06/2025 08:32:42</span></div><div class="c" style="left:1603px;top:736px;width:244px;height:22px"><span style="top:3.03px;letter-spacing:-0.079px;margin-right:0.079px">30/06/2025 08:36:48</span></div><div class="c" style="left:32px;top:759px;width:79px;height:22px"><span style="top:3.03px;letter-spacing:0.000px;margin-right:-0.000px">16</span></div><div class="c" style="left:115px;top:759px;width:244px;height:22px"><span style="top:3.03px;letter-spacing:0.000px;margin-right:-0.000px">1228807</span></div><div class="c" style="left:363px;top:759px;width:244px;height:22px"><span style="top:3.03px;letter-spacing:0.001px;margin-right:-0.001px">DHYDTEST</span></div><div class="c" style="left:611px;top:759px;width:244px;height:22px"><span style="top:3.03px;letter-spacing:0.265px;margin-right:-0.265px">ĐẠI HỌC Y DƯỢC THÀNH PHỐ HỒ CHÍ MINH</span></div><div class="c" style="left:859px;top:759px;width:244px;height:22px"><span style="top:3.03px;letter-spacing:0.000px;margin-right:-0.000px">0302203609YD</span></div><div class="c" style="left:1107px;top:759px;width:244px;height:22px"><span style="top:3.03px;letter-spacing:-0.185px;margin-right:0.185px">Company</span></div><div class="c" style="left:1355px;top:759px;width:244px;height:22px"><span style="top:3.03px;letter-spacing:-0.079px;margin-right:0.079px">27/06/2025 09:41:07</span></div><div class="c" style="left:1603px;top:759px;width:244px;height:22px"><span style="top:3.03px;letter-spacing:-0.079px;margin-right:0.079px">27/06/2025 09:44:48</span></div><div class="c" style="left:32px;top:782px;width:79px;height:22px"><span style="top:3.03px;letter-spacing:0.000px;margin-right:-0.000px">17</span></div><div class="c" style="left:115px;top:782px;width:244px;height:22px"><span style="top:3.03px;letter-spacing:0.000px;margin-right:-0.000px">1228795</span></div><div class="c" style="left:363px;top:782px;width:244px;height:22px"><span style="top:3.03px;letter-spacing:-0.007px;margin-right:0.007px">GPP</span></div><div class="c" style="left:611px;top:782px;width:244px;height:22px"><span style="top:3.03px;letter-spacing:-0.007px;margin-right:0.007px">GPP</span></div><div class="c" style="left:859px;top:782px;width:244px;height:22px"><span style="top:3.03px;letter-spacing:-0.002px;margin-right:0.002px">1402088084GPP</span></div><div class="c" style="left:1107px;top:782px;width:244px;height:22px"><span style="top:3.03px;letter-spacing:-0.185px;margin-right:0.185px">Company</span></div><div class="c" style="left:1355px;top:782px;width:244px;height:22px"><span style="top:3.03px;letter-spacing:-0.079px;margin-right:0.079px">26/06/2025 10:01:05</span></div><div class="c" style="left:1603px;top:782px;width:244px;height:22px"><span style="top:3.03px;letter-spacing:-0.079px;margin-right:0.079px">26/06/2025 10:04:51</span></div><div class="c" style="left:32px;top:805px;width:79px;height:22px"><span style="top:3.03px;letter-spacing:0.000px;margin-right:-0.000px">18</span></div><div class="c" style="left:115px;top:805px;width:244px;height:22px"><span style="top:3.03px;letter-spacing:0.000px;margin-right:-0.000px">1228785</span></div><div class="c" style="left:363px;top:805px;width:244px;height:22px"><span style="top:3.03px;letter-spacing:0.003px;margin-right:-0.003px">VIETLOTTTEST</span></div><div class="c" style="left:611px;top:805px;width:244px;height:22px"><span style="top:3.03px;letter-spacing:0.245px;margin-right:-0.245px">CÔNG TY CỔ PHẦN ĐẦU TƯ KỸ THUẬT SỐ VIỆT</span></div><div class="c" style="left:859px;top:805px;width:244px;height:22px"><span style="top:3.03px;letter-spacing:0.001px;margin-right:-0.001px">0105570286TE</span></div><div class="c" style="left:1107px;top:805px;width:244px;height:22px"><span style="top:3.03px;letter-spacing:-0.185px;margin-right:0.185px">Company</span></div><div class="c" style="left:1355px;top:805px;width:244px;height:22px"><span style="top:3.03px;letter-spacing:-0.079px;margin-right:0.079px">25/06/2025 02:27:04</span></div><div class="c" style="left:1603px;top:805px;width:244px;height:22px"><span style="top:3.03px;letter-spacing:-0.079px;margin-right:0.079px">25/06/2025 02:30:01</span></div><div class="c" style="left:32px;top:828px;width:79px;height:22px"><span style="top:3.03px;letter-spacing:0.000px;margin-right:-0.000px">19</span></div><div class="c" style="left:115px;top:828px;width:244px;height:22px"><span style="top:3.03px;letter-spacing:0.000px;margin-right:-0.000px">1228760</span></div><div class="c" style="left:363px;top:828px;width:244px;height:22px"><span style="top:3.03px;letter-spacing:0.001px;margin-right:-0.001px">BIDVTEST</span></div><div class="c" style="left:611px;top:828px;width:244px;height:22px"><span style="top:3.03px;letter-spacing:0.001px;margin-right:-0.001px">BIDVTEST</span></div><div class="c" style="left:859px;top:828px;width:244px;height:22px"><span style="top:3.03px;letter-spacing:0.000px;margin-right:-0.000px">0823469039</span></div><div class="c" style="left:1107px;top:828px;width:244px;height:22px"><span style="top:3.03px;letter-spacing:-0.185px;margin-right:0.185px">Company</span></div><div class="c" style="left:1355px;top:828px;width:244px;height:22px"><span style="top:3.03px;letter-spacing:-0.079px;margin-right:0.079px">24/06/2025 09:19:18</span></div><div class="c" style="left:1603px;top:828px;width:244px;height:22px"><span style="top:3.03px;letter-spacing:-0.079px;margin-right:0.079px">24/06/2025 09:30:22</span></div><div class="c" style="left:32px;top:851px;width:79px;height:22px"><span style="top:3.03px;letter-spacing:0.000px;margin-right:-0.000px">20</span></div><div class="c" style="left:115px;top:851px;width:244px;height:22px"><span style="top:3.03px;letter-spacing:0.000px;margin-right:-0.000px">1228747</span></div><div class="c" style="left:363px;top:851px;width:244px;height:22px"><span style="top:3.03px;letter-spacing:0.001px;margin-right:-0.001px">HKTEST</span></div><div class="c" style="left:611px;top:851px;width:244px;height:22px"><span style="top:3.03px;letter-spacing:0.152px;margin-right:-0.152px">HỘ KINH DOANH DỊCH VỤ HUỲNH KHANG</span></div><div class="c" style="left:859px;top:851px;width:244px;height:22px"><span style="top:3.03px;letter-spacing:0.000px;margin-right:-0.000px">46E8037076TR</span></div><div class="c" style="left:1107px;top:851px;width:244px;height:22px"><span style="top:3.03px;letter-spacing:-0.128px;margin-right:0.128px">Household business</span></div><div class="c" style="left:1355px;top:851px;width:244px;height:22px"><span style="top:3.03px;letter-spacing:-0.079px;margin-right:0.079px">23/06/2025 01:32:12</span></div><div class="c" style="left:1603px;top:851px;width:244px;height:22px"><span style="top:3.03px;letter-spacing:-0.079px;margin-right:0.079px">23/06/2025 01:33:58</span></div><div class="c" style="left:32px;top:874px;width:79px;height:22px"><span style="top:3.03px;letter-spacing:0.000px;margin-right:-0.000px">21</span></div><div class="c" style="left:115px;top:874px;width:244px;height:22px"><span style="top:3.03px;letter-spacing:0.000px;margin-right:-0.000px">1228738</span></div><div class="c" style="left:363px;top:874px;width:244px;height:22px"><span style="top:3.03px;letter-spacing:0.001px;margin-right:-0.001px">HOANT1BIDV</span></div><div class="c" style="left:611px;top:874px;width:244px;height:22px"><span style="top:3.03px;letter-spacing:-0.062px;margin-right:0.062px">Hoant1_BIDV</span></div><div class="c" style="left:859px;top:874px;width:244px;height:22px"><span style="top:3.03px;letter-spacing:0.000px;margin-right:-0.000px">0823469339</span></div><div class="c" style="left:1107px;top:874px;width:244px;height:22px"><span style="top:3.03px;letter-spacing:-0.185px;margin-right:0.185px">Company</span></div><div class="c" style="left:1355px;top:874px;width:244px;height:22px"><span style="top:3.03px;letter-spacing:-0.079px;margin-right:0.079px">20/06/2025 04:02:05</span></div><div class="c" style="left:1603px;top:874px;width:244px;height:22px"><span style="top:3.03px;letter-spacing:-0.079px;margin-right:0.079px">20/06/2025 04:07:15</span></div><svg class="b" style="left:363px;top:414px" width="7" height="7" viewBox="0 0 7 7"><path d="M0 0H7L0 7Z" fill="#217346"/></svg><svg class="b" style="left:363px;top:437px" width="7" height="7" viewBox="0 0 7 7"><path d="M0 0H7L0 7Z" fill="#217346"/></svg><svg class="b" style="left:363px;top:460px" width="7" height="7" viewBox="0 0 7 7"><path d="M0 0H7L0 7Z" fill="#217346"/></svg><svg class="b" style="left:363px;top:483px" width="7" height="7" viewBox="0 0 7 7"><path d="M0 0H7L0 7Z" fill="#217346"/></svg><svg class="b" style="left:611px;top:414px" width="7" height="7" viewBox="0 0 7 7"><path d="M0 0H7L0 7Z" fill="#217346"/></svg><svg class="b" style="left:611px;top:437px" width="7" height="7" viewBox="0 0 7 7"><path d="M0 0H7L0 7Z" fill="#217346"/></svg><svg class="b" style="left:611px;top:460px" width="7" height="7" viewBox="0 0 7 7"><path d="M0 0H7L0 7Z" fill="#217346"/></svg><svg class="b" style="left:611px;top:483px" width="7" height="7" viewBox="0 0 7 7"><path d="M0 0H7L0 7Z" fill="#217346"/></svg><svg class="b" style="left:859px;top:414px" width="7" height="7" viewBox="0 0 7 7"><path d="M0 0H7L0 7Z" fill="#217346"/></svg><svg class="b" style="left:859px;top:437px" width="7" height="7" viewBox="0 0 7 7"><path d="M0 0H7L0 7Z" fill="#217346"/></svg><svg class="b" style="left:859px;top:460px" width="7" height="7" viewBox="0 0 7 7"><path d="M0 0H7L0 7Z" fill="#217346"/></svg><svg class="b" style="left:859px;top:483px" width="7" height="7" viewBox="0 0 7 7"><path d="M0 0H7L0 7Z" fill="#217346"/></svg><svg class="b" style="left:859px;top:506px" width="7" height="7" viewBox="0 0 7 7"><path d="M0 0H7L0 7Z" fill="#217346"/></svg><svg class="b" style="left:859px;top:667px" width="7" height="7" viewBox="0 0 7 7"><path d="M0 0H7L0 7Z" fill="#217346"/></svg><svg class="b" style="left:859px;top:690px" width="7" height="7" viewBox="0 0 7 7"><path d="M0 0H7L0 7Z" fill="#217346"/></svg><svg class="b" style="left:859px;top:713px" width="7" height="7" viewBox="0 0 7 7"><path d="M0 0H7L0 7Z" fill="#217346"/></svg><svg class="b" style="left:859px;top:828px" width="7" height="7" viewBox="0 0 7 7"><path d="M0 0H7L0 7Z" fill="#217346"/></svg><svg class="b" style="left:859px;top:874px" width="7" height="7" viewBox="0 0 7 7"><path d="M0 0H7L0 7Z" fill="#217346"/></svg><div class="b" style="left:1887px;top:316px;width:1px;height:745px;background:#a6a6a6"></div><div class="b" style="left:1888px;top:295px;width:6px;height:766px;background:#e6e6e6"></div><div class="b" style="left:1890px;top:295px;width:1px;height:767px;background:#c6c6c6"></div><div class="b" style="left:1891px;top:296px;width:3px;height:766px;background:#fff"></div><div class="b" style="left:1891px;top:1013px;width:3px;height:25px;background:#d4d4d4"></div><div class="b" style="left:0px;top:1061px;width:1894px;height:35px;background:#e6e6e6"></div><div class="b" style="left:0px;top:1061px;width:1894px;height:1px;background:#c6c6c6"></div><div class="b" style="left:0px;top:1095px;width:1894px;height:1px;background:#cfcfcf"></div><div class="b" style="left:0px;top:1096px;width:1894px;height:5px;background:#f3f3f3"></div><div class="b" style="left:116px;top:1061px;width:89px;height:31px;background:#fff;border-left:1px solid #c6c6c6;border-right:1px solid #c6c6c6;box-sizing:border-box"></div><div class="b" style="left:116px;top:1090px;width:89px;height:2px;background:#217346"></div><div class="t" style="left:128px;top:1066.92px;font-size:19px;color:#217346;font-weight:700;font-family:'Liberation Sans', sans-serif;">Sheet1</div><div class="b" style="left:1166px;top:1065px;width:722px;height:25px;background:#dcdcdc;border:1px solid #c6c6c6;box-sizing:border-box"></div><div class="b" style="left:1166px;top:1065px;width:25px;height:25px;background:#fff;border:1px solid #c6c6c6;box-sizing:border-box"></div><div class="b" style="left:1191px;top:1065px;width:471px;height:25px;background:#fff;border:1px solid #bdbdbd;box-sizing:border-box"></div><div class="b" style="left:1864px;top:1065px;width:24px;height:25px;background:#fff;border:1px solid #c6c6c6;box-sizing:border-box"></div><svg class="b" style="left:10px;top:104px" width="50" height="50" viewBox="0 0 50 50"><rect x="4" y="7.5" width="33" height="36.5" rx="1.5" fill="#e9c070"/><rect x="10" y="7.5" width="21" height="4.5" fill="#6a6a6a"/><rect x="16" y="2" width="9" height="6" fill="#6a6a6a"/><circle cx="20.5" cy="5" r="1.4" fill="#f3f3f3"/><path d="M24.5 19.5H37.5L44.5 26.5V46.5H24.5Z" fill="#fff" stroke="#6a6a6a" stroke-width="1"/><path d="M37.5 19.5V26.5H44.5" fill="none" stroke="#6a6a6a" stroke-width="1"/></svg><div class="t" style="left:11px;top:158.03px;font-size:16.5px;color:#262626;font-weight:400;font-family:'Liberation Sans', sans-serif;letter-spacing:0.1px;">Paste</div><svg class="b" style="left:28px;top:187px" width="7" height="4" viewBox="0 0 7 4"><path d="M0 0H7L3.5 4Z" fill="#5f5f5f"/></svg><svg class="b" style="left:62px;top:104px" width="26" height="26" viewBox="0 0 26 26"><path d="M6 2.5L16.5 16.5M18 2.5L7.5 16.5" stroke="#555" stroke-width="2" fill="none"/><circle cx="6" cy="19.2" r="3.3" fill="none" stroke="#6c8ebf" stroke-width="1.6"/><circle cx="17.5" cy="19.2" r="3.3" fill="none" stroke="#6c8ebf" stroke-width="1.6"/></svg><div class="t" style="left:90px;top:109.36px;font-size:17.3px;color:#262626;font-weight:400;font-family:'Liberation Sans', sans-serif;">Cut</div><svg class="b" style="left:64px;top:138px" width="24" height="24" viewBox="0 0 24 24"><path d="M1.5 1.5H8.5L11.5 4.5V15.5H1.5Z" fill="#fff" stroke="#6a6a6a"/><path d="M3.5 6.5H9.5M3.5 9.5H9.5M3.5 12.5H9.5" stroke="#6a6a6a"/><path d="M10.5 8.5H17.5L20.5 11.5V22.5H10.5Z" fill="#fff" stroke="#6a6a6a"/><path d="M12.5 13.5H18.5M12.5 16.5H18.5M12.5 19.5H18.5" stroke="#6a6a6a"/></svg><div class="t" style="left:90px;top:141.86px;font-size:17.3px;color:#262626;font-weight:400;font-family:'Liberation Sans', sans-serif;">Copy</div><svg class="b" style="left:143px;top:150px" width="7" height="4" viewBox="0 0 7 4"><path d="M0 0H7L3.5 4Z" fill="#5f5f5f"/></svg><svg class="b" style="left:62px;top:171px" width="26" height="26" viewBox="0 0 26 26"><path d="M22.5 3.5L17 9" stroke="#6a6a6a" stroke-width="4" stroke-linecap="round"/><path d="M18.5 7L9.5 16" stroke="#6a6a6a" stroke-width="5.5"/><path d="M10.5 10.5L15.5 15.5L9.5 22L3.5 16Z" fill="#e9c070"/></svg><div class="t" style="left:90px;top:174.86px;font-size:17.3px;color:#262626;font-weight:400;font-family:'Liberation Sans', sans-serif;">Format Painter</div><svg class="b" style="left:199px;top:212px" width="10" height="10" viewBox="0 0 10 10"><path d="M0.5 7V0.5H7" fill="none" stroke="#777"/><path d="M3 3L8.5 8.5M5 8.5H8.5V5" fill="none" stroke="#555" stroke-width="1.2"/></svg><div class="b" style="left:221px;top:113px;width:134px;height:32px;background:#fff;border:1px solid #c6c6c6;box-sizing:border-box"></div><div class="b" style="left:354px;top:113px;width:65px;height:32px;background:#fff;border:1px solid #c6c6c6;box-sizing:border-box"></div><div class="b" style="left:222px;top:114px;width:116px;height:30px;overflow:hidden"><div class="t" style="left:5px;top:7.36px;font-size:17.3px;color:#333;font-weight:400;font-family:'Liberation Sans', sans-serif;">Times New Roman</div></div><svg class="b" style="left:342px;top:126px" width="7" height="4" viewBox="0 0 7 4"><path d="M0 0H7L3.5 4Z" fill="#5f5f5f"/></svg><div class="t" style="left:362px;top:121.36px;font-size:17.3px;color:#333;font-weight:400;font-family:'Liberation Sans', sans-serif;">14</div><svg class="b" style="left:406px;top:126px" width="7" height="4" viewBox="0 0 7 4"><path d="M0 0H7L3.5 4Z" fill="#5f5f5f"/></svg><div class="t" style="left:424px;top:120.22px;font-size:21px;color:#555;font-weight:700;font-family:'Liberation Sans', sans-serif;">A</div><svg class="b" style="left:437px;top:117px" width="8" height="5" viewBox="0 0 8 5"><path d="M0 5H8L4 0Z" fill="#6c8ebf"/></svg><div class="t" style="left:455px;top:124.46px;font-size:16px;color:#555;font-weight:700;font-family:'Liberation Sans', sans-serif;">A</div><svg class="b" style="left:467px;top:117px" width="7" height="5" viewBox="0 0 7 5"><path d="M0 0H7L3.5 5Z" fill="#6c8ebf"/></svg><div class="b" style="left:221px;top:158px;width:30px;height:31px;background:#c6c6c6"></div><div class="t" style="left:230px;top:163.49px;font-size:19.5px;color:#3a3a3a;font-weight:700;font-family:'Liberation Sans', sans-serif;">B</div><div class="t" style="left:258px;top:163.57px;font-size:20px;color:#444;font-weight:700;font-family:'Liberation Sans', sans-serif;font-family:'Liberation Serif',serif;font-style:italic;">I</div><div class="t" style="left:287.5px;top:163.84px;font-size:18.5px;color:#444;font-weight:700;font-family:'Liberation Sans', sans-serif;">U</div><div class="b" style="left:288px;top:181px;width:15px;height:1.6px;background:#444"></div><svg class="b" style="left:315px;top:172px" width="7" height="4" viewBox="0 0 7 4"><path d="M0 0H7L3.5 4Z" fill="#5f5f5f"/></svg><div class="b" style="left:330px;top:159px;width:1px;height:32px;background:#d6d6d6"></div><svg class="b" style="left:338px;top:161px" width="24" height="23" viewBox="0 0 24 23"><path d="M1 1.5H22M1 11.5H22M1 21.5H22M1.5 1V21M11.5 1V21M21.5 1V21" stroke="#6a6a6a" stroke-dasharray="1 1.2" fill="none"/><path d="M1 21.5H22" stroke="#555" stroke-width="1.6"/></svg><svg class="b" style="left:369px;top:172px" width="7" height="4" viewBox="0 0 7 4"><path d="M0 0H7L3.5 4Z" fill="#5f5f5f"/></svg><div class="b" style="left:384px;top:159px;width:1px;height:32px;background:#d6d6d6"></div><svg class="b" style="left:392px;top:159px" width="26" height="27" viewBox="0 0 26 27"><path d="M4.2 13.4L11.5 6L18.7 13.2L11.4 20.4Z" fill="#fff" stroke="#444" stroke-width="1.3"/><path d="M9.3 8.2V2.2H13.3V9.5" fill="none" stroke="#555" stroke-width="1.3"/><circle cx="13.3" cy="9.8" r="1.5" fill="#555"/><path d="M17.5 8.5C21.5 10.5 22.5 14 20.2 19" fill="none" stroke="#4a6f9a" stroke-width="2.2"/><rect x="0.2" y="19.8" width="23.7" height="6.1" fill="#ffff00"/></svg><svg class="b" style="left:423px;top:172px" width="7" height="4" viewBox="0 0 7 4"><path d="M0 0H7L3.5 4Z" fill="#5f5f5f"/></svg><div class="t" style="left:440px;top:162.49px;font-size:19.5px;color:#555;font-weight:700;font-family:'Liberation Sans', sans-serif;">A</div><div class="b" style="left:437px;top:179px;width:24px;height:6px;background:#e00000"></div><svg class="b" style="left:467px;top:172px" width="7" height="4" viewBox="0 0 7 4"><path d="M0 0H7L3.5 4Z" fill="#5f5f5f"/></svg><svg class="b" style="left:467px;top:212px" width="10" height="10" viewBox="0 0 10 10"><path d="M0.5 7V0.5H7" fill="none" stroke="#777"/><path d="M3 3L8.5 8.5M5 8.5H8.5V5" fill="none" stroke="#555" stroke-width="1.2"/></svg><div class="b" style="left:518px;top:113px;width:30px;height:31px;background:#c6c6c6"></div><div class="b" style="left:518px;top:157px;width:30px;height:31px;background:#c6c6c6"></div><svg class="b" style="left:0;top:0" width="1" height="1"><rect x="493" y="116.5" width="20" height="1.6" fill="#555"/><rect x="496" y="120.5" width="14" height="1.6" fill="#555"/><rect x="493" y="124.5" width="20" height="1.6" fill="#555"/></svg><svg class="b" style="left:0;top:0" width="1" height="1"><rect x="523" y="122.5" width="20" height="1.6" fill="#555"/><rect x="526" y="126.5" width="14" height="1.6" fill="#555"/><rect x="523" y="130.5" width="20" height="1.6" fill="#555"/></svg><svg class="b" style="left:0;top:0" width="1" height="1"><rect x="553" y="128.5" width="20" height="1.6" fill="#555"/><rect x="556" y="132.5" width="14" height="1.6" fill="#555"/><rect x="553" y="136.5" width="20" height="1.6" fill="#555"/></svg><svg class="b" style="left:0;top:0" width="1" height="1"><rect x="493" y="160.5" width="20" height="1.6" fill="#555"/><rect x="493" y="164.5" width="16" height="1.6" fill="#555"/><rect x="493" y="168.5" width="20" height="1.6" fill="#555"/><rect x="493" y="172.5" width="16" height="1.6" fill="#555"/><rect x="493" y="176.5" width="20" height="1.6" fill="#555"/><rect x="493" y="180.5" width="16" height="1.6" fill="#555"/></svg><svg class="b" style="left:0;top:0" width="1" height="1"><rect x="523" y="160.5" width="20" height="1.6" fill="#555"/><rect x="526" y="164.5" width="14" height="1.6" fill="#555"/><rect x="523" y="168.5" width="20" height="1.6" fill="#555"/><rect x="526" y="172.5" width="14" height="1.6" fill="#555"/><rect x="523" y="176.5" width="20" height="1.6" fill="#555"/><rect x="526" y="180.5" width="14" height="1.6" fill="#555"/></svg><svg class="b" style="left:0;top:0" width="1" height="1"><rect x="553" y="160.5" width="20" height="1.6" fill="#555"/><rect x="557" y="164.5" width="16" height="1.6" fill="#555"/><rect x="553" y="168.5" width="20" height="1.6" fill="#555"/><rect x="557" y="172.5" width="16" height="1.6" fill="#555"/><rect x="553" y="176.5" width="20" height="1.6" fill="#555"/><rect x="557" y="180.5" width="16" height="1.6" fill="#555"/></svg><div class="b" style="left:582px;top:112px;width:1px;height:32px;background:#d6d6d6"></div><div class="b" style="left:582px;top:157px;width:1px;height:32px;background:#d6d6d6"></div><svg class="b" style="left:590px;top:117px" width="26" height="24" viewBox="0 0 26 24"><text x="0" y="0" font-family="Liberation Sans" font-size="14" fill="#444" transform="translate(6.5 18.5) rotate(-45)">ab</text><path d="M10 20L21 9M17 9H21V13" fill="none" stroke="#555" stroke-width="1.5"/></svg><svg class="b" style="left:619px;top:127px" width="8" height="4" viewBox="0 0 8 4"><path d="M0 0H8L4.0 4Z" fill="#5f5f5f"/></svg><svg class="b" style="left:0;top:0" width="1" height="1"><rect x="591" y="160.5" width="22" height="1.6" fill="#555"/><rect x="591" y="180.5" width="22" height="1.6" fill="#555"/></svg><svg class="b" style="left:0;top:0" width="1" height="1"><rect x="602" y="164.5" width="11" height="1.6" fill="#555"/><rect x="602" y="168.5" width="11" height="1.6" fill="#555"/><rect x="602" y="172.5" width="11" height="1.6" fill="#555"/><rect x="602" y="176.5" width="11" height="1.6" fill="#555"/></svg><svg class="b" style="left:591px;top:166px" width="10" height="11" viewBox="0 0 10 11"><path d="M0 5.5L5 0.5H8L4.5 4H10V7H4.5L8 10.5H5Z" fill="#3f78c0"/></svg><svg class="b" style="left:0;top:0" width="1" height="1"><rect x="621" y="160.5" width="22" height="1.6" fill="#555"/><rect x="621" y="180.5" width="22" height="1.6" fill="#555"/></svg><svg class="b" style="left:0;top:0" width="1" height="1"><rect x="632" y="164.5" width="11" height="1.6" fill="#555"/><rect x="632" y="168.5" width="11" height="1.6" fill="#555"/><rect x="632" y="172.5" width="11" height="1.6" fill="#555"/><rect x="632" y="176.5" width="11" height="1.6" fill="#555"/></svg><svg class="b" style="left:621px;top:166px" width="10" height="11" viewBox="0 0 10 11"><path d="M10 5.5L5 0.5H2L5.5 4H0V7H5.5L2 10.5H5Z" fill="#3f78c0"/></svg><div class="b" style="left:651px;top:107px;width:1px;height:86px;background:#d6d6d6"></div><div class="t" style="left:662.5px;top:115.23px;font-size:14.5px;color:#444;font-weight:400;font-family:'Liberation Sans', sans-serif;">ab</div><div class="t" style="left:662.5px;top:125.73px;font-size:14.5px;color:#444;font-weight:400;font-family:'Liberation Sans', sans-serif;">c</div><svg class="b" style="left:671px;top:130px" width="10" height="9" viewBox="0 0 10 9"><path d="M8.5 0.5V4.5H2M4.5 2L2 4.5L4.5 7" fill="none" stroke="#4a6f9a" stroke-width="1.2"/></svg><div class="t" style="left:687px;top:120.86px;font-size:17.3px;color:#262626;font-weight:400;font-family:'Liberation Sans', sans-serif;">Wrap Text</div><div class="b" style="left:656px;top:157px;width:179px;height:31px;background:#c6c6c6"></div><svg class="b" style="left:659px;top:160px" width="24" height="23" viewBox="0 0 24 23"><rect x="0.5" y="0.5" width="22" height="22" fill="#fff" stroke="#555"/><path d="M0.5 6.5H22.5M0.5 16.5H22.5M11.5 0.5V6.5M11.5 16.5V22.5" stroke="#555" fill="none"/><path d="M4 11.5H19M7 8.5L4 11.5L7 14.5M16 8.5L19 11.5L16 14.5" stroke="#3f78c0" stroke-width="1.3" fill="none"/></svg><div class="t" style="left:687px;top:164.60px;font-size:17.6px;color:#262626;font-weight:400;font-family:'Liberation Sans', sans-serif;">Merge &amp; Center</div><svg class="b" style="left:823px;top:172px" width="7" height="4" viewBox="0 0 7 4"><path d="M0 0H7L3.5 4Z" fill="#5f5f5f"/></svg><svg class="b" style="left:823px;top:212px" width="10" height="10" viewBox="0 0 10 10"><path d="M0.5 7V0.5H7" fill="none" stroke="#777"/><path d="M3 3L8.5 8.5M5 8.5H8.5V5" fill="none" stroke="#555" stroke-width="1.2"/></svg><div class="b" style="left:844px;top:113px;width:174px;height:32px;background:#fff;border:1px solid #c6c6c6;box-sizing:border-box"></div><div class="t" style="left:849.5px;top:122.03px;font-size:16.5px;color:#333;font-weight:400;font-family:'Liberation Sans', sans-serif;letter-spacing:0.1px;">General</div><svg class="b" style="left:1005px;top:126px" width="7" height="4" viewBox="0 0 7 4"><path d="M0 0H7L3.5 4Z" fill="#5f5f5f"/></svg><div class="t" style="left:852px;top:162.53px;font-size:23px;color:#555;font-weight:400;font-family:'Liberation Sans', sans-serif;">$</div><svg class="b" style="left:877px;top:172px" width="8" height="4" viewBox="0 0 8 4"><path d="M0 0H8L4.0 4Z" fill="#5f5f5f"/></svg><div class="t" style="left:893px;top:161.26px;font-size:24.5px;color:#555;font-weight:400;font-family:'Liberation Sans', sans-serif;transform:scaleX(0.9);transform-origin:0 0;">%</div><svg class="b" style="left:926px;top:164px" width="14" height="17" viewBox="0 0 14 17"><path d="M7.5 2C10.5 2 12 4.2 12 6.8C12 10.5 9.5 13.5 4.5 15.5L3.8 14.2C6.5 12.8 8 11.2 8.3 9.6C5.5 9.8 3.6 8.3 3.6 5.8C3.6 3.6 5.2 2 7.5 2Z" fill="#555"/></svg><div class="b" style="left:953px;top:160px;width:1px;height:28px;background:#d6d6d6"></div><svg class="b" style="left:962px;top:161px" width="24" height="25" viewBox="0 0 24 25"><path d="M1 5.5L5 1.5M1 5.5L5 9.5M1 5.5H8" stroke="#3f78c0" stroke-width="2" fill="none"/><text x="8" y="10" font-family="Liberation Sans" font-size="13" fill="#444">.0</text><text x="1" y="22" font-family="Liberation Sans" font-size="13" fill="#444">.00</text></svg><svg class="b" style="left:994px;top:161px" width="24" height="25" viewBox="0 0 24 25"><text x="1" y="10" font-family="Liberation Sans" font-size="13" fill="#444">.00</text><path d="M2 17.5H9M9 17.5L5 13.5M9 17.5L5 21.5" stroke="#3f78c0" stroke-width="2" fill="none"/><text x="9" y="22" font-family="Liberation Sans" font-size="13" fill="#444">.0</text></svg><svg class="b" style="left:1006px;top:212px" width="10" height="10" viewBox="0 0 10 10"><path d="M0.5 7V0.5H7" fill="none" stroke="#777"/><path d="M3 3L8.5 8.5M5 8.5H8.5V5" fill="none" stroke="#555" stroke-width="1.2"/></svg><svg class="b" style="left:1060px;top:105px" width="46" height="48" viewBox="0 0 46 48"><rect x="0.5" y="0.5" width="40" height="32" fill="#fff" stroke="#6a6a6a"/><path d="M0.5 8.5H40.5M0.5 16.5H40.5M0.5 24.5H40.5M12.5 0.5V32.5M27.5 0.5V32.5" stroke="#6a6a6a" fill="none"/><rect x="12.5" y="0.5" width="9" height="8" fill="#e0643c"/><rect x="12.5" y="8.5" width="14" height="8" fill="#3f78c0"/><rect x="12.5" y="16.5" width="11" height="8" fill="#e0643c"/><rect x="12.5" y="24.5" width="6" height="8" fill="#3f78c0"/><rect x="23.5" y="27.5" width="20" height="17" fill="#fff" stroke="#6a6a6a"/><text x="28" y="41" font-family="Liberation Sans" font-size="14" fill="#333">≠</text></svg><div class="t" style="left:1034px;top:157.26px;font-size:18px;color:#262626;font-weight:400;font-family:'Liberation Sans', sans-serif;">Conditional</div><div class="t" style="left:1030px;top:180.76px;font-size:18px;color:#262626;font-weight:400;font-family:'Liberation Sans', sans-serif;">Formatting</div><svg class="b" style="left:1123px;top:187px" width="7" height="4" viewBox="0 0 7 4"><path d="M0 0H7L3.5 4Z" fill="#5f5f5f"/></svg><svg class="b" style="left:1155px;top:108px" width="48" height="46" viewBox="0 0 48 46"><rect x="0.5" y="1.5" width="40" height="32" fill="#fff" stroke="#555"/><rect x="10.5" y="9.5" width="30" height="24" fill="#b7c9e2"/><path d="M0.5 9.5H40.5M0.5 17.5H40.5M0.5 25.5H40.5M10.5 1.5V33.5M20.5 1.5V33.5M30.5 1.5V33.5" stroke="#555" fill="none" stroke-opacity="0.85"/><g transform="translate(0 0)"><path d="M44 10.5V21.5L36.5 29L31 23.5Z" fill="#6a6a6a" stroke="#f3f3f3" stroke-width="0.8"/><path d="M30 24.5L35.5 30L31.5 34L26 28.5Z" fill="#6a6a6a" stroke="#f3f3f3" stroke-width="0.8"/><circle cx="26" cy="34.5" r="4.6" fill="#fff" stroke="#555" stroke-width="1"/><path d="M11 42.7C15 37.5 19 33.5 23 33C26 33 27.5 35.5 26.5 37.8C24.5 41 18 42.5 11 42.7Z" fill="#3f78c0"/></g></svg><div class="t" style="left:1136px;top:157.60px;font-size:17.6px;color:#262626;font-weight:400;font-family:'Liberation Sans', sans-serif;">Format as</div><div class="t" style="left:1149px;top:181.61px;font-size:17px;color:#262626;font-weight:400;font-family:'Liberation Sans', sans-serif;">Table</div><svg class="b" style="left:1195px;top:187px" width="7" height="4" viewBox="0 0 7 4"><path d="M0 0H7L3.5 4Z" fill="#5f5f5f"/></svg><svg class="b" style="left:1227px;top:106px" width="48" height="46" viewBox="0 0 48 46"><rect x="0.5" y="0.5" width="40" height="32" fill="#fff" stroke="#555"/><rect x="7.5" y="7.5" width="26" height="18" fill="#b7c9e2"/><path d="M0.5 7.5H40.5M0.5 25.5H40.5M7.5 0.5V32.5M33.5 0.5V32.5" stroke="#555" fill="none"/><g transform="translate(0 -3.5)"><path d="M44 10.5V21.5L36.5 29L31 23.5Z" fill="#6a6a6a" stroke="#f3f3f3" stroke-width="0.8"/><path d="M30 24.5L35.5 30L31.5 34L26 28.5Z" fill="#6a6a6a" stroke="#f3f3f3" stroke-width="0.8"/><circle cx="26" cy="34.5" r="4.6" fill="#fff" stroke="#555" stroke-width="1"/><path d="M11 42.7C15 37.5 19 33.5 23 33C26 33 27.5 35.5 26.5 37.8C24.5 41 18 42.5 11 42.7Z" fill="#3f78c0"/></g></svg><div class="t" style="left:1234.5px;top:157.60px;font-size:17.6px;color:#262626;font-weight:400;font-family:'Liberation Sans', sans-serif;">Cell</div><div class="t" style="left:1219.5px;top:181.61px;font-size:17px;color:#262626;font-weight:400;font-family:'Liberation Sans', sans-serif;">Styles</div><svg class="b" style="left:1270px;top:187px" width="7" height="4" viewBox="0 0 7 4"><path d="M0 0H7L3.5 4Z" fill="#5f5f5f"/></svg><svg class="b" style="left:1295px;top:106px" width="46" height="46" viewBox="0 0 46 46"><path d="M3.5 0.5H25.5V8.5H3.5ZM14.5 0.5V8.5" fill="#fff" stroke="#6a6a6a"/><path d="M3.5 26.5H25.5V42.5H3.5ZM3.5 34.5H25.5M14.5 26.5V42.5" fill="#fff" stroke="#6a6a6a"/><path d="M20.5 13.5H42.5V21.5H20.5ZM31.5 13.5V21.5" fill="#b4c7e3" stroke="#6a6a6a"/><path d="M1.5 17.5H16M1.5 17.5L7 12M1.5 17.5L7 23" stroke="#3f78c0" stroke-width="2.5" fill="none"/></svg><div class="t" style="left:1297px;top:157.36px;font-size:17.3px;color:#262626;font-weight:400;font-family:'Liberation Sans', sans-serif;">Insert</div><svg class="b" style="left:1315px;top:187px" width="7" height="4" viewBox="0 0 7 4"><path d="M0 0H7L3.5 4Z" fill="#5f5f5f"/></svg><svg class="b" style="left:1354px;top:106px" width="46" height="46" viewBox="0 0 46 46"><path d="M3.5 0.5H25.5V8.5H3.5ZM14.5 0.5V8.5" fill="#fff" stroke="#6a6a6a"/><path d="M3.5 26.5H25.5V42.5H3.5ZM3.5 34.5H25.5M14.5 26.5V42.5" fill="#fff" stroke="#6a6a6a"/><path d="M11.5 13.5H25.5V21.5H11.5Z" fill="#b4c7e3" stroke="#6a6a6a"/><path d="M23 10L42 27M41 10L23 27" stroke="#d9543a" stroke-width="2.6" fill="none"/></svg><div class="t" style="left:1351.5px;top:157.36px;font-size:17.3px;color:#262626;font-weight:400;font-family:'Liberation Sans', sans-serif;">Delete</div><svg class="b" style="left:1373px;top:187px" width="7" height="4" viewBox="0 0 7 4"><path d="M0 0H7L3.5 4Z" fill="#5f5f5f"/></svg><svg class="b" style="left:1414px;top:104px" width="46" height="48" viewBox="0 0 46 48"><path d="M1.5 0.5V7.5M39.5 0.5V7.5M5 4H36M5 4L9 0.8M5 4L9 7.2M36 4L32 0.8M36 4L32 7.2" stroke="#3f78c0" stroke-width="1.6" fill="none"/><rect x="1.5" y="10.5" width="40" height="29" fill="#fff" stroke="#6a6a6a"/><path d="M1.5 17.5H41.5M1.5 32.5H41.5M11.5 10.5V39.5M23.5 10.5V39.5M33.5 10.5V39.5" stroke="#6a6a6a" fill="none"/><rect x="11.5" y="17.5" width="10" height="14" fill="#3f78c0"/><path d="M1.5 39.5V44.5H12L15 40M16 44.5H26L29 40" stroke="#6a6a6a" fill="none"/></svg><div class="t" style="left:1408px;top:157.36px;font-size:17.3px;color:#262626;font-weight:400;font-family:'Liberation Sans', sans-serif;">Format</div><svg class="b" style="left:1433px;top:187px" width="7" height="4" viewBox="0 0 7 4"><path d="M0 0H7L3.5 4Z" fill="#5f5f5f"/></svg><svg class="b" style="left:1481px;top:104px" width="20" height="22" viewBox="0 0 20 22"><path d="M1 2H16V5.5M1 2L9 11L1 20H16.5V16.5" fill="none" stroke="#444" stroke-width="2.6" stroke-linejoin="miter"/></svg><div class="t" style="left:1506px;top:108.10px;font-size:17.6px;color:#262626;font-weight:400;font-family:'Liberation Sans', sans-serif;">AutoSum</div><svg class="b" style="left:1592px;top:114px" width="7" height="4" viewBox="0 0 7 4"><path d="M0 0H7L3.5 4Z" fill="#5f5f5f"/></svg><svg class="b" style="left:1480px;top:133px" width="22" height="25" viewBox="0 0 22 25"><rect x="0.5" y="0.5" width="20" height="22" fill="#fff" stroke="#6a6a6a"/><rect x="0.5" y="0.5" width="20" height="3" fill="#6a6a6a"/><path d="M10.5 7V17M6 13L10.5 17.5L15 13" fill="none" stroke="#3f78c0" stroke-width="2.2"/></svg><div class="t" style="left:1506.5px;top:138.36px;font-size:17.3px;color:#262626;font-weight:400;font-family:'Liberation Sans', sans-serif;">Fill</div><svg class="b" style="left:1533px;top:144px" width="7" height="4" viewBox="0 0 7 4"><path d="M0 0H7L3.5 4Z" fill="#5f5f5f"/></svg><svg class="b" style="left:1478px;top:164px" width="26" height="26" viewBox="0 0 26 26"><path d="M17.1 3.1L22.7 9L14 18.5L7.3 12.7Z" fill="#e07a8e"/><path d="M5.4 14.2L11.6 20.4L9.1 22.9L3.2 16Z" fill="#d77b90"/></svg><div class="t" style="left:1506.5px;top:170.20px;font-size:16.3px;color:#262626;font-weight:400;font-family:'Liberation Sans', sans-serif;">Clear</div><svg class="b" style="left:1551px;top:175px" width="7" height="4" viewBox="0 0 7 4"><path d="M0 0H7L3.5 4Z" fill="#5f5f5f"/></svg><div class="t" style="left:1611px;top:103.53px;font-size:23px;color:#4377b5;font-weight:700;font-family:'Liberation Sans', sans-serif;transform:scaleX(0.85);transform-origin:0 0;">A</div><div class="t" style="left:1612.5px;top:125.03px;font-size:23px;color:#8e62c0;font-weight:700;font-family:'Liberation Sans', sans-serif;transform:scaleX(0.85);transform-origin:0 0;">Z</div><svg class="b" style="left:1630px;top:115px" width="26" height="24" viewBox="0 0 26 24"><path d="M1 1H25L16 11V22H10V11Z" fill="#6a6a6a"/></svg><div class="t" style="left:1607.5px;top:156.76px;font-size:18px;color:#262626;font-weight:400;font-family:'Liberation Sans', sans-serif;">Sort &amp;</div><div class="t" style="left:1608px;top:181.36px;font-size:17.3px;color:#262626;font-weight:400;font-family:'Liberation Sans', sans-serif;">Filter</div><svg class="b" style="left:1651px;top:187px" width="7" height="4" viewBox="0 0 7 4"><path d="M0 0H7L3.5 4Z" fill="#5f5f5f"/></svg><svg class="b" style="left:1672px;top:103px" width="44" height="46" viewBox="0 0 44 46"><circle cx="26.5" cy="18.5" r="12.5" fill="#fff" stroke="#3f78c0" stroke-width="3.4"/><path d="M17.5 27.5L5 40" stroke="#3f78c0" stroke-width="4.5" stroke-linecap="round"/></svg><div class="t" style="left:1667.5px;top:157.10px;font-size:17.6px;color:#262626;font-weight:400;font-family:'Liberation Sans', sans-serif;">Find &amp;</div><div class="t" style="left:1664.5px;top:181.61px;font-size:17px;color:#262626;font-weight:400;font-family:'Liberation Sans', sans-serif;">Select</div><svg class="b" style="left:1716px;top:187px" width="7" height="4" viewBox="0 0 7 4"><path d="M0 0H7L3.5 4Z" fill="#5f5f5f"/></svg><svg class="b" style="left:29px;top:13px" width="22" height="22" viewBox="0 0 22 22"><path d="M2 2H19.5V19.5H2Z" fill="none" stroke="#f2fbf5" stroke-width="2.2"/><rect x="2" y="11.5" width="17.5" height="8" fill="#f2fbf5"/><rect x="6.1" y="14.2" width="7.6" height="4.6" fill="#217346"/><rect x="8.2" y="15.2" width="2.2" height="3.6" fill="#f2fbf5"/></svg><svg class="b" style="left:70px;top:12px" width="24" height="24" viewBox="0 0 24 24"><path d="M3.5 8.2H14A6.2 6.2 0 0 1 14 20.6H13" fill="none" stroke="#f2fbf5" stroke-width="2.4"/><path d="M9.5 3L3.2 8.2L9.5 13.4" fill="none" stroke="#f2fbf5" stroke-width="2.4"/></svg><svg class="b" style="left:104px;top:22px" width="8" height="5" viewBox="0 0 8 5"><path d="M0 0H8L4 4.5Z" fill="#f2fbf5"/></svg><svg class="b" style="left:124px;top:12px" width="24" height="24" viewBox="0 0 24 24"><g transform="translate(24 0) scale(-1 1)"><path d="M3.5 8.2H14A6.2 6.2 0 0 1 14 20.6H13" fill="none" stroke="#5a9d72" stroke-width="2.4"/><path d="M9.5 3L3.2 8.2L9.5 13.4" fill="none" stroke="#5a9d72" stroke-width="2.4"/></g></svg><svg class="b" style="left:159px;top:22px" width="8" height="5" viewBox="0 0 8 5"><path d="M0 0H8L4 4.5Z" fill="#4f9168"/></svg><svg class="b" style="left:186px;top:18px" width="11" height="9" viewBox="0 0 11 9"><path d="M0.5 1H10.5" stroke="#f2fbf5" stroke-width="1.3"/><path d="M0.5 3.5H10.5L5.5 8.5Z" fill="#f2fbf5"/></svg><svg class="b" style="left:1666px;top:15px" width="20" height="16" viewBox="0 0 20 16"><rect x="0.5" y="0.5" width="18.5" height="14" fill="none" stroke="#79ae8d"/><path d="M0.5 3.5H19M9.75 14.5V6M6.5 9.2L9.75 6L13 9.2" fill="none" stroke="#79ae8d"/></svg><div class="b" style="left:1737px;top:23px;width:15px;height:1px;background:#79ae8d"></div><svg class="b" style="left:1806px;top:15px" width="16" height="16" viewBox="0 0 16 16"><path d="M3.5 3.5V0.5H14.5V11.5H11.5" fill="none" stroke="#79ae8d"/><rect x="0.5" y="3.5" width="11" height="11" fill="none" stroke="#79ae8d"/></svg><svg class="b" style="left:1875px;top:15px" width="16" height="16" viewBox="0 0 16 16"><path d="M0.5 0.5L14.5 14.5M14.5 0.5L0.5 14.5" stroke="#79ae8d" stroke-width="1.1"/></svg><svg class="b" style="left:840px;top:61px" width="22" height="27" viewBox="0 0 22 27"><path d="M6.8 18C4.3 15.5 2.9 13.2 2.9 10A7.9 7.9 0 0 1 18.7 10C18.7 13.2 17.3 15.5 14.8 18V21.5H6.8Z" fill="none" stroke="#f2fbf5" stroke-width="1.7"/><path d="M8 23.8H13.6" stroke="#f2fbf5" stroke-width="1.7"/></svg><svg class="b" style="left:1819px;top:62px" width="25" height="25" viewBox="0 0 25 25"><circle cx="11" cy="7" r="5.3" fill="none" stroke="#f2fbf5" stroke-width="1.4"/><path d="M1.5 23C2 17 6 13.5 11 13.5C13 13.5 14.5 14 15.8 15" fill="none" stroke="#f2fbf5" stroke-width="1.4"/><path d="M18 16V24M14 20H22" stroke="#f2fbf5" stroke-width="1.4"/></svg><svg class="b" style="left:138px;top:259px" width="9" height="5" viewBox="0 0 9 5"><path d="M0 0H8L4 4.5Z" fill="#555"/></svg><div class="b" style="left:177px;top:256px;width:3px;height:3px;background:#a6a6a6;border-radius:1px"></div><div class="b" style="left:177px;top:261.5px;width:3px;height:3px;background:#a6a6a6;border-radius:1px"></div><div class="b" style="left:177px;top:267px;width:3px;height:3px;background:#a6a6a6;border-radius:1px"></div><svg class="b" style="left:220px;top:253px" width="20" height="17" viewBox="0 0 20 17"><path d="M1.5 1.5L17.5 15.5M17.5 1.5L1.5 15.5" stroke="#a8a8a8" stroke-width="2"/></svg><svg class="b" style="left:274px;top:253px" width="21" height="17" viewBox="0 0 21 17"><path d="M1.5 9L7.5 14.5L19.5 2" fill="none" stroke="#a8a8a8" stroke-width="2.4"/></svg><div class="t" style="left:327px;top:249.53px;font-size:23px;color:#555;font-weight:700;font-family:'Liberation Sans', sans-serif;font-family:'Liberation Serif',serif;font-style:italic;">f</div><div class="t" style="left:335.5px;top:254.61px;font-size:17px;color:#555;font-weight:700;font-family:'Liberation Sans', sans-serif;font-family:'Liberation Serif',serif;font-style:italic;">x</div><svg class="b" style="left:12px;top:298px" width="17" height="17" viewBox="0 0 17 17"><path d="M16 1V16H1Z" fill="#b8b8b8"/></svg><svg class="b" style="left:26px;top:1069px" width="9" height="17" viewBox="0 0 9 17"><path d="M8 1V16L1 8.5Z" fill="#b9b9b9"/></svg><svg class="b" style="left:60px;top:1069px" width="9" height="17" viewBox="0 0 9 17"><path d="M1 1V16L8 8.5Z" fill="#b9b9b9"/></svg><svg class="b" style="left:243px;top:1066px" width="24" height="24" viewBox="0 0 24 24"><circle cx="12" cy="12" r="10.5" fill="none" stroke="#777" stroke-width="1.4"/><path d="M12 6.5V17.5M6.5 12H17.5" stroke="#666" stroke-width="1.8"/></svg><div class="b" style="left:1146px;top:1070px;width:3px;height:3px;background:#a0a0a0;border-radius:1px"></div><div class="b" style="left:1146px;top:1076px;width:3px;height:3px;background:#a0a0a0;border-radius:1px"></div><div class="b" style="left:1146px;top:1082px;width:3px;height:3px;background:#a0a0a0;border-radius:1px"></div><svg class="b" style="left:1174px;top:1071px" width="8" height="13" viewBox="0 0 8 13"><path d="M7 1V12L1 6.5Z" fill="#6a6a6a"/></svg><svg class="b" style="left:1872px;top:1071px" width="8" height="13" viewBox="0 0 8 13"><path d="M1 1V12L7 6.5Z" fill="#6a6a6a"/></svg><div class="b" style="left:1543px;top:1096px;width:45px;height:5px;background:#c6c6c6"></div><div class="b" style="left:31px;top:316px;width:1px;height:745px;background:#c0c0c0"></div><div class="b" style="left:1892px;top:217px;width:2px;height:3px;background:#555"></div><div class="b" style="left:1892px;top:258px;width:2px;height:5px;background:#444"></div>

</body></html>
